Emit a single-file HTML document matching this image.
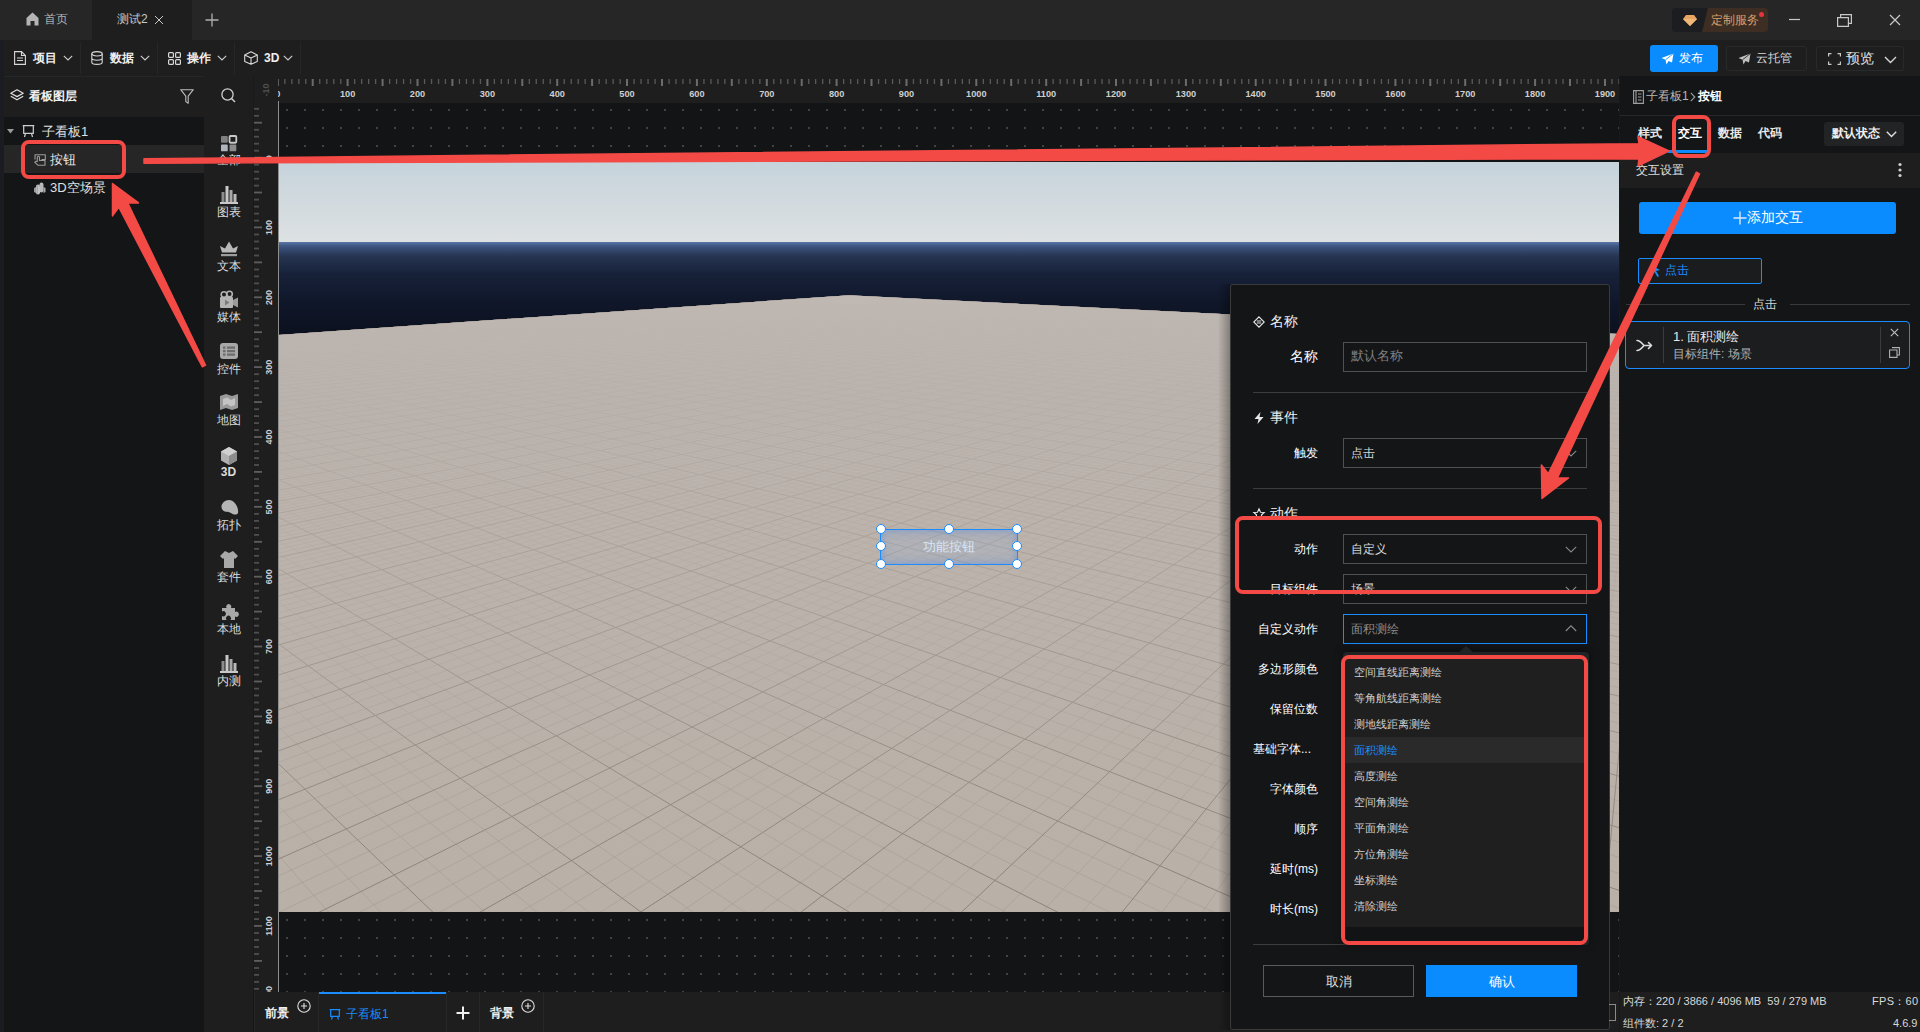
<!DOCTYPE html>
<html><head><meta charset="utf-8"><style>
html,body{margin:0;padding:0;width:1920px;height:1032px;overflow:hidden;background:#141517;font-family:"Liberation Sans", sans-serif;}
.r{position:absolute;}
.t{position:absolute;white-space:nowrap;}
svg.r{overflow:visible;}
</style></head><body>
<div class="r" style="left:0px;top:0px;width:1920px;height:40px;background:#262626;"></div>
<div class="r" style="left:92px;top:0px;width:100px;height:40px;background:#1e1e1e;"></div>
<svg class="r" style="left:26px;top:12px;" width="13" height="14" viewBox="0 0 13 14"><path d="M6.5 0.5 L12.5 6 L12.5 13.5 L8.5 13.5 L8.5 9 L4.5 9 L4.5 13.5 L0.5 13.5 L0.5 6 Z" fill="#b4b4b4"/></svg>
<div class="t" style="left:44px;top:12px;font-size:12px;line-height:14px;color:#b0b0b0;font-weight:normal;">首页</div>
<div class="t" style="left:117px;top:12px;font-size:12px;line-height:14px;color:#c8c8c8;font-weight:normal;">测试2</div>
<svg class="r" style="left:154px;top:15px;" width="10" height="10" viewBox="0 0 10 10"><path d="M1 1L9 9M9 1L1 9" stroke="#c8c8c8" stroke-width="1"/></svg>
<svg class="r" style="left:205px;top:13px;" width="14" height="14" viewBox="0 0 14 14"><path d="M7 0.5V13.5M0.5 7H13.5" stroke="#b0b0b0" stroke-width="1.3"/></svg>
<div class="r" style="left:1672px;top:8px;width:36px;height:24px;background:#1c1d21;border-radius:4px 0 0 4px"></div>
<svg class="r" style="left:1702px;top:8px;" width="66" height="24" viewBox="0 0 66 24"><path d="M6 0 H62 Q66 0 66 4 V20 Q66 24 62 24 H0 Z" fill="#3d2d22"/></svg>
<svg class="r" style="left:1683px;top:15px;" width="14" height="11" viewBox="0 0 14 11"><path d="M3 0 H11 L14 4 L7 11 L0 4 Z" fill="#e7a55f"/><path d="M0 4 H14 L7 11Z" fill="#f0b878"/></svg>
<div class="t" style="left:1711px;top:13px;font-size:12px;line-height:14px;color:#d8a070;font-weight:normal;">定制服务</div>
<div class="r" style="left:1759px;top:12px;width:5px;height:5px;background:#e8343c;border-radius:50%"></div>
<svg class="r" style="left:1789px;top:18px;" width="12" height="3" viewBox="0 0 12 3"><path d="M0 1.5H11" stroke="#c8c8c8" stroke-width="1.2"/></svg>
<svg class="r" style="left:1837px;top:13px;" width="16" height="14" viewBox="0 0 16 14"><path d="M0.6 4.6H11.4V13.4H0.6Z M3.6 4.6V1.6H14.4V10.4H11.4" fill="none" stroke="#c8c8c8" stroke-width="1.2"/></svg>
<svg class="r" style="left:1889px;top:14px;" width="12" height="12" viewBox="0 0 12 12"><path d="M1 1L11 11M11 1L1 11" stroke="#c8c8c8" stroke-width="1.2"/></svg>
<div class="r" style="left:0px;top:40px;width:1920px;height:36px;background:#1e1e1e;"></div>
<div class="r" style="left:0px;top:40px;width:4px;height:992px;background:#1a1c21;"></div>
<div class="r" style="left:80px;top:42px;width:1px;height:32px;background:#252628;"></div>
<div class="r" style="left:157px;top:42px;width:1px;height:32px;background:#252628;"></div>
<div class="r" style="left:234px;top:42px;width:1px;height:32px;background:#252628;"></div>
<div class="r" style="left:300px;top:42px;width:1px;height:32px;background:#252628;"></div>
<svg class="r" style="left:14px;top:51px;" width="12" height="14" viewBox="0 0 12 14"><path d="M0.6 0.6H7.5L11.4 4.5V13.4H0.6Z M7.5 0.6V4.5H11.4 M3 7H9 M3 9.5H9" fill="none" stroke="#d8d8d8" stroke-width="1.1"/></svg>
<div class="t" style="left:33px;top:51px;font-size:12px;line-height:14px;color:#f0f0f0;font-weight:bold;">项目</div>
<svg class="r" style="left:63px;top:55px;" width="10" height="6" viewBox="0 0 10 6"><path d="M0.8 0.8L5 5L9.2 0.8" fill="none" stroke="#cfcfcf" stroke-width="1.1"/></svg>
<svg class="r" style="left:91px;top:51px;" width="12" height="14" viewBox="0 0 12 14"><ellipse cx="6" cy="2.8" rx="5.2" ry="2.2" fill="none" stroke="#d8d8d8" stroke-width="1.1"/><path d="M0.8 2.8V11.2C0.8 12.4 3 13.4 6 13.4C9 13.4 11.2 12.4 11.2 11.2V2.8M0.8 7C0.8 8.2 3 9.2 6 9.2C9 9.2 11.2 8.2 11.2 7" fill="none" stroke="#d8d8d8" stroke-width="1.1"/></svg>
<div class="t" style="left:110px;top:51px;font-size:12px;line-height:14px;color:#f0f0f0;font-weight:bold;">数据</div>
<svg class="r" style="left:140px;top:55px;" width="10" height="6" viewBox="0 0 10 6"><path d="M0.8 0.8L5 5L9.2 0.8" fill="none" stroke="#cfcfcf" stroke-width="1.1"/></svg>
<svg class="r" style="left:168px;top:52px;" width="13" height="13" viewBox="0 0 13 13"><rect x="0.6" y="0.6" width="4.8" height="4.8" rx="1" fill="none" stroke="#d8d8d8" stroke-width="1.2"/><rect x="7.6" y="0.6" width="4.8" height="4.8" rx="1" fill="none" stroke="#d8d8d8" stroke-width="1.2"/><rect x="0.6" y="7.6" width="4.8" height="4.8" rx="1" fill="none" stroke="#d8d8d8" stroke-width="1.2"/><rect x="7.6" y="7.6" width="4.8" height="4.8" rx="1" fill="none" stroke="#d8d8d8" stroke-width="1.2"/></svg>
<div class="t" style="left:187px;top:51px;font-size:12px;line-height:14px;color:#f0f0f0;font-weight:bold;">操作</div>
<svg class="r" style="left:217px;top:55px;" width="10" height="6" viewBox="0 0 10 6"><path d="M0.8 0.8L5 5L9.2 0.8" fill="none" stroke="#cfcfcf" stroke-width="1.1"/></svg>
<svg class="r" style="left:244px;top:51px;" width="14" height="14" viewBox="0 0 14 14"><path d="M7 0.7L13.3 4V10.5L7 13.3L0.7 10.5V4Z M0.7 4L7 7L13.3 4 M7 7V13.3" fill="none" stroke="#d8d8d8" stroke-width="1.1" stroke-linejoin="round"/></svg>
<div class="t" style="left:264px;top:51px;font-size:12px;line-height:14px;color:#f0f0f0;font-weight:bold;">3D</div>
<svg class="r" style="left:283px;top:55px;" width="10" height="6" viewBox="0 0 10 6"><path d="M0.8 0.8L5 5L9.2 0.8" fill="none" stroke="#cfcfcf" stroke-width="1.1"/></svg>
<div class="r" style="left:1650px;top:45px;width:68px;height:27px;background:#0a8cff;border-radius:3px"></div>
<svg class="r" style="left:1661px;top:53px;" width="13" height="12" viewBox="0 0 13 12"><path d="M12.5 0.5L0.5 5L4.5 6.8L5.5 11.5L7.5 8L11 9.5Z" fill="#ffffff"/><path d="M12.5 0.5L4.5 6.8" stroke="#0a8cff" stroke-width="0.8"/></svg>
<div class="t" style="left:1679px;top:51px;font-size:12px;line-height:14px;color:#ffffff;font-weight:normal;">发布</div>
<div class="r" style="left:1726px;top:46px;width:81px;height:25px;background:transparent;border:1px solid #28292b;border-radius:3px;box-sizing:border-box"></div>
<svg class="r" style="left:1738px;top:53px;" width="13" height="12" viewBox="0 0 13 12"><path d="M12.5 0.5L0.5 5L4.5 6.8L5.5 11.5L7.5 8L11 9.5Z" fill="#c0c0c0"/><path d="M12.5 0.5L4.5 6.8" stroke="#1e1e1e" stroke-width="0.8"/></svg>
<div class="t" style="left:1756px;top:51px;font-size:12px;line-height:14px;color:#d8d8d8;font-weight:normal;">云托管</div>
<div class="r" style="left:1816px;top:46px;width:88px;height:25px;background:transparent;border:1px solid #28292b;border-radius:3px;box-sizing:border-box"></div>
<svg class="r" style="left:1828px;top:53px;" width="13" height="12" viewBox="0 0 13 12"><path d="M0.6 3.5V0.6H3.5 M9.5 0.6H12.4V3.5 M12.4 8.5V11.4H9.5 M3.5 11.4H0.6V8.5" fill="none" stroke="#c8c8c8" stroke-width="1.2"/></svg>
<div class="t" style="left:1846px;top:50px;font-size:14px;line-height:16px;color:#e0e0e0;font-weight:normal;">预览</div>
<svg class="r" style="left:1884px;top:56px;" width="13" height="8" viewBox="0 0 13 8"><path d="M1 1L6.5 6.5L12 1" fill="none" stroke="#d8d8d8" stroke-width="1.4"/></svg>
<div class="r" style="left:4px;top:76px;width:200px;height:41px;background:#1e1e1e;"></div>
<div class="r" style="left:4px;top:76px;width:200px;height:1px;background:#25262a;"></div>
<div class="r" style="left:4px;top:117px;width:200px;height:915px;background:#141517;"></div>
<svg class="r" style="left:10px;top:89px;" width="14" height="13" viewBox="0 0 14 13"><path d="M7 0.8L13.2 4.2L7 7.6L0.8 4.2Z" fill="none" stroke="#e0e0e0" stroke-width="1.2" stroke-linejoin="round"/><path d="M0.8 7.2L7 10.8L13.2 7.2" fill="none" stroke="#e0e0e0" stroke-width="1.2" stroke-linejoin="round"/></svg>
<div class="t" style="left:29px;top:89px;font-size:12px;line-height:14px;color:#f2f2f2;font-weight:bold;">看板图层</div>
<svg class="r" style="left:180px;top:89px;" width="14" height="15" viewBox="0 0 14 15"><path d="M0.7 0.7H13.3L8.2 7.2V14.2L5.8 12.6V7.2Z" fill="none" stroke="#bdbdbd" stroke-width="1.1" stroke-linejoin="round"/></svg>
<div class="r" style="left:4px;top:145px;width:200px;height:28px;background:#262626;"></div>
<svg class="r" style="left:7px;top:129px;" width="8" height="5" viewBox="0 0 8 5"><path d="M0 0H7L3.5 4.5Z" fill="#9a9a9a"/></svg>
<svg class="r" style="left:22px;top:125px;" width="13" height="13" viewBox="0 0 13 13"><path d="M0.7 0.7H12.3 M1.7 0.7V8.3H11.3V0.7 M3.5 8.3L2.5 12 M9.5 8.3L10.5 12" fill="none" stroke="#cfcfcf" stroke-width="1.2"/></svg>
<div class="t" style="left:42px;top:124px;font-size:13px;line-height:15px;color:#e0e0e0;font-weight:normal;">子看板1</div>
<svg class="r" style="left:34px;top:154px;" width="12" height="12" viewBox="0 0 12 12"><path d="M1 5.5V0.7H11.3V5.5H7.5M3.3 7.8V3.3Q3.3 2.2 4.4 2.2Q5.5 2.2 5.5 3.3V6.5H11V11.3H4.2L0.8 8.3L2.2 7.3L3.3 7.8" fill="none" stroke="#9c9c9c" stroke-width="1.1" stroke-linejoin="round"/></svg>
<div class="t" style="left:50px;top:152px;font-size:13px;line-height:15px;color:#e8e8e8;font-weight:normal;">按钮</div>
<svg class="r" style="left:34px;top:182px;" width="12" height="12" viewBox="0 0 12 12"><path d="M0 6L2 5V11L0 10Z" fill="#9a9a9a"/><path d="M9.5 5L11.5 6V10L9.5 11Z" fill="#a8a8a8"/><rect x="5.5" y="0.5" width="4" height="10" rx="2" fill="#b8b8b8"/><rect x="2" y="2.5" width="4" height="10" rx="2" fill="#c4c4c4"/><rect x="2.6" y="3.5" width="1.2" height="8" fill="#a0a0a0"/></svg>
<div class="t" style="left:50px;top:180px;font-size:13px;line-height:15px;color:#e0e0e0;font-weight:normal;">3D空场景</div>
<div class="r" style="left:204px;top:76px;width:49px;height:956px;background:#1e1e1e;"></div>
<svg class="r" style="left:221px;top:88px;" width="15" height="15" viewBox="0 0 15 15"><circle cx="6.5" cy="6.5" r="5.6" fill="none" stroke="#d0d0d0" stroke-width="1.3"/><path d="M10.5 10.5L14 14" stroke="#d0d0d0" stroke-width="1.4"/></svg>
<svg class="r" style="left:220px;top:135px;" width="18" height="18" viewBox="0 0 18 18"><g transform="translate(1 1) scale(0.9)"><rect x="0" y="0" width="7.5" height="7.5" rx="1" fill="#808080"/><rect x="9.5" y="0" width="7.5" height="7.5" rx="1" fill="none" stroke="#c8c8c8" stroke-width="2"/><rect x="0" y="9.5" width="7.5" height="7.5" rx="1" fill="#b0b4bc"/><rect x="9.5" y="9.5" width="7.5" height="7.5" rx="1" fill="#8c8c8c"/></g></svg>
<div class="t" style="left:204px;top:153px;font-size:12px;line-height:14px;color:#dcdcdc;font-weight:normal;width:49px;text-align:center">全部</div>
<svg class="r" style="left:220px;top:186px;" width="18" height="18" viewBox="0 0 18 18"><rect x="1.5" y="6" width="3" height="10" fill="#8c8c8c"/><rect x="5.5" y="0" width="3" height="16" fill="#c8c8c8"/><rect x="9.5" y="4" width="3" height="12" fill="#a8a8a8"/><rect x="13.5" y="8" width="3" height="8" fill="#b8b8b8"/><rect x="0" y="16" width="18" height="2" fill="#c8c8c8"/></svg>
<div class="t" style="left:204px;top:205px;font-size:12px;line-height:14px;color:#dcdcdc;font-weight:normal;width:49px;text-align:center">图表</div>
<svg class="r" style="left:220px;top:240px;" width="18" height="18" viewBox="0 0 18 18"><path d="M0 6L5 8.5L9 1.5L13 8.5L18 6L16 12.5H2Z" fill="#b8b8b8"/><rect x="1" y="14" width="16" height="2.2" fill="#9c9c9c"/></svg>
<div class="t" style="left:204px;top:259px;font-size:12px;line-height:14px;color:#dcdcdc;font-weight:normal;width:49px;text-align:center">文本</div>
<svg class="r" style="left:220px;top:291px;" width="18" height="18" viewBox="0 0 18 18"><rect x="0" y="6" width="13" height="11" rx="1" fill="#b4b4b4"/><path d="M13 9L18 6.5V16.5L13 14Z" fill="#9a9a9a"/><circle cx="4" cy="3.5" r="2.8" fill="none" stroke="#b4b4b4" stroke-width="1.6"/><circle cx="9.5" cy="3" r="2.8" fill="none" stroke="#b4b4b4" stroke-width="1.6"/><path d="M5 8.5L9.5 11.5L5 14.5Z" fill="#7c7c7c"/></svg>
<div class="t" style="left:204px;top:310px;font-size:12px;line-height:14px;color:#dcdcdc;font-weight:normal;width:49px;text-align:center">媒体</div>
<svg class="r" style="left:220px;top:343px;" width="18" height="18" viewBox="0 0 18 18"><rect x="0" y="0" width="18" height="16" rx="3" fill="#a8a8a8"/><rect x="3" y="3.5" width="2.5" height="2.2" fill="#6c6c6c"/><rect x="7" y="3.5" width="8" height="2.2" fill="#6c6c6c"/><rect x="3" y="7" width="2.5" height="2.2" fill="#6c6c6c"/><rect x="7" y="7" width="8" height="2.2" fill="#6c6c6c"/><rect x="3" y="10.5" width="2.5" height="2.2" fill="#6c6c6c"/><rect x="7" y="10.5" width="8" height="2.2" fill="#6c6c6c"/></svg>
<div class="t" style="left:204px;top:362px;font-size:12px;line-height:14px;color:#dcdcdc;font-weight:normal;width:49px;text-align:center">控件</div>
<svg class="r" style="left:220px;top:394px;" width="18" height="18" viewBox="0 0 18 18"><path d="M0 2L6 0L12 2L18 0V14L12 16L6 14L0 16Z" fill="#9a9a9a"/><path d="M3 5L7 3.5L11 6L15 4V11L11 12.5L7 10L3 12Z" fill="#c4c4c4"/></svg>
<div class="t" style="left:204px;top:413px;font-size:12px;line-height:14px;color:#dcdcdc;font-weight:normal;width:49px;text-align:center">地图</div>
<svg class="r" style="left:220px;top:447px;" width="18" height="18" viewBox="0 0 18 18"><path d="M9 0L17 4.5V13.5L9 18L1 13.5V4.5Z" fill="#b0b0b0"/><path d="M1 4.5L9 9L17 4.5L9 0Z" fill="#d0d0d0"/><path d="M9 9V18L17 13.5V4.5Z" fill="#8c8c8c"/></svg>
<div class="t" style="left:204px;top:465px;font-size:12px;line-height:14px;color:#dcdcdc;font-weight:bold;width:49px;text-align:center">3D</div>
<svg class="r" style="left:220px;top:499px;" width="18" height="18" viewBox="0 0 18 18"><path d="M2 10C0 6 4 1 9 1C14 1 19 8 18 14C17 16 14 16 11 14C8 12 4 14 2 10Z" fill="#b4b4b4"/></svg>
<div class="t" style="left:204px;top:518px;font-size:12px;line-height:14px;color:#dcdcdc;font-weight:normal;width:49px;text-align:center">拓扑</div>
<svg class="r" style="left:220px;top:551px;" width="18" height="18" viewBox="0 0 18 18"><path d="M5 0L9 2L13 0L18 5L15 8L14 7V17H4V7L3 8L0 5Z" fill="#a8a8a8"/></svg>
<div class="t" style="left:204px;top:570px;font-size:12px;line-height:14px;color:#dcdcdc;font-weight:normal;width:49px;text-align:center">套件</div>
<svg class="r" style="left:220px;top:603px;" width="18" height="18" viewBox="0 0 18 18"><path d="M2 5H6.5A2.6 2.6 0 1 1 11 5H15V9A2.6 2.6 0 1 1 15 13.5V17H10.5A2.6 2.6 0 1 0 6.5 17H2V13A2.6 2.6 0 1 0 2 8.5Z" fill="#a8a8a8"/></svg>
<div class="t" style="left:204px;top:622px;font-size:12px;line-height:14px;color:#dcdcdc;font-weight:normal;width:49px;text-align:center">本地</div>
<svg class="r" style="left:220px;top:655px;" width="18" height="18" viewBox="0 0 18 18"><rect x="1.5" y="6" width="3" height="10" fill="#8c8c8c"/><rect x="5.5" y="0" width="3" height="16" fill="#c8c8c8"/><rect x="9.5" y="4" width="3" height="12" fill="#a8a8a8"/><rect x="13.5" y="8" width="3" height="8" fill="#b8b8b8"/><rect x="0" y="16" width="18" height="2" fill="#c8c8c8"/></svg>
<div class="t" style="left:204px;top:674px;font-size:12px;line-height:14px;color:#dcdcdc;font-weight:normal;width:49px;text-align:center">内测</div>
<div class="r" style="left:253px;top:76px;width:1367px;height:27px;background:#1e1e1e;"></div>
<div class="r" style="left:253px;top:103px;width:25px;height:889px;background:#1e1e1e;"></div>
<svg class="r" style="left:253px;top:76px;" width="1367" height="27" viewBox="0 0 1367 27"><rect x="23.8" y="3" width="2" height="7" fill="#6c6c6c"/><rect x="31.2" y="3" width="1.3" height="5" fill="#5a5a5a"/><rect x="38.2" y="3" width="1.3" height="5" fill="#5a5a5a"/><rect x="45.2" y="3" width="1.3" height="5" fill="#5a5a5a"/><rect x="52.1" y="3" width="1.3" height="5" fill="#5a5a5a"/><rect x="58.7" y="3" width="2" height="7" fill="#6c6c6c"/><rect x="66.1" y="3" width="1.3" height="5" fill="#5a5a5a"/><rect x="73.1" y="3" width="1.3" height="5" fill="#5a5a5a"/><rect x="80.1" y="3" width="1.3" height="5" fill="#5a5a5a"/><rect x="87.1" y="3" width="1.3" height="5" fill="#5a5a5a"/><rect x="93.6" y="3" width="2" height="7" fill="#6c6c6c"/><rect x="101.0" y="3" width="1.3" height="5" fill="#5a5a5a"/><rect x="108.0" y="3" width="1.3" height="5" fill="#5a5a5a"/><rect x="115.0" y="3" width="1.3" height="5" fill="#5a5a5a"/><rect x="122.0" y="3" width="1.3" height="5" fill="#5a5a5a"/><rect x="128.6" y="3" width="2" height="7" fill="#6c6c6c"/><rect x="136.0" y="3" width="1.3" height="5" fill="#5a5a5a"/><rect x="142.9" y="3" width="1.3" height="5" fill="#5a5a5a"/><rect x="149.9" y="3" width="1.3" height="5" fill="#5a5a5a"/><rect x="156.9" y="3" width="1.3" height="5" fill="#5a5a5a"/><rect x="163.5" y="3" width="2" height="7" fill="#6c6c6c"/><rect x="170.9" y="3" width="1.3" height="5" fill="#5a5a5a"/><rect x="177.9" y="3" width="1.3" height="5" fill="#5a5a5a"/><rect x="184.9" y="3" width="1.3" height="5" fill="#5a5a5a"/><rect x="191.8" y="3" width="1.3" height="5" fill="#5a5a5a"/><rect x="198.4" y="3" width="2" height="7" fill="#6c6c6c"/><rect x="205.8" y="3" width="1.3" height="5" fill="#5a5a5a"/><rect x="212.8" y="3" width="1.3" height="5" fill="#5a5a5a"/><rect x="219.8" y="3" width="1.3" height="5" fill="#5a5a5a"/><rect x="226.8" y="3" width="1.3" height="5" fill="#5a5a5a"/><rect x="233.4" y="3" width="2" height="7" fill="#6c6c6c"/><rect x="240.7" y="3" width="1.3" height="5" fill="#5a5a5a"/><rect x="247.7" y="3" width="1.3" height="5" fill="#5a5a5a"/><rect x="254.7" y="3" width="1.3" height="5" fill="#5a5a5a"/><rect x="261.7" y="3" width="1.3" height="5" fill="#5a5a5a"/><rect x="268.3" y="3" width="2" height="7" fill="#6c6c6c"/><rect x="275.7" y="3" width="1.3" height="5" fill="#5a5a5a"/><rect x="282.6" y="3" width="1.3" height="5" fill="#5a5a5a"/><rect x="289.6" y="3" width="1.3" height="5" fill="#5a5a5a"/><rect x="296.6" y="3" width="1.3" height="5" fill="#5a5a5a"/><rect x="303.2" y="3" width="2" height="7" fill="#6c6c6c"/><rect x="310.6" y="3" width="1.3" height="5" fill="#5a5a5a"/><rect x="317.6" y="3" width="1.3" height="5" fill="#5a5a5a"/><rect x="324.6" y="3" width="1.3" height="5" fill="#5a5a5a"/><rect x="331.5" y="3" width="1.3" height="5" fill="#5a5a5a"/><rect x="338.1" y="3" width="2" height="7" fill="#6c6c6c"/><rect x="345.5" y="3" width="1.3" height="5" fill="#5a5a5a"/><rect x="352.5" y="3" width="1.3" height="5" fill="#5a5a5a"/><rect x="359.5" y="3" width="1.3" height="5" fill="#5a5a5a"/><rect x="366.5" y="3" width="1.3" height="5" fill="#5a5a5a"/><rect x="373.0" y="3" width="2" height="7" fill="#6c6c6c"/><rect x="380.4" y="3" width="1.3" height="5" fill="#5a5a5a"/><rect x="387.4" y="3" width="1.3" height="5" fill="#5a5a5a"/><rect x="394.4" y="3" width="1.3" height="5" fill="#5a5a5a"/><rect x="401.4" y="3" width="1.3" height="5" fill="#5a5a5a"/><rect x="408.0" y="3" width="2" height="7" fill="#6c6c6c"/><rect x="415.4" y="3" width="1.3" height="5" fill="#5a5a5a"/><rect x="422.3" y="3" width="1.3" height="5" fill="#5a5a5a"/><rect x="429.3" y="3" width="1.3" height="5" fill="#5a5a5a"/><rect x="436.3" y="3" width="1.3" height="5" fill="#5a5a5a"/><rect x="442.9" y="3" width="2" height="7" fill="#6c6c6c"/><rect x="450.3" y="3" width="1.3" height="5" fill="#5a5a5a"/><rect x="457.3" y="3" width="1.3" height="5" fill="#5a5a5a"/><rect x="464.3" y="3" width="1.3" height="5" fill="#5a5a5a"/><rect x="471.2" y="3" width="1.3" height="5" fill="#5a5a5a"/><rect x="477.8" y="3" width="2" height="7" fill="#6c6c6c"/><rect x="485.2" y="3" width="1.3" height="5" fill="#5a5a5a"/><rect x="492.2" y="3" width="1.3" height="5" fill="#5a5a5a"/><rect x="499.2" y="3" width="1.3" height="5" fill="#5a5a5a"/><rect x="506.2" y="3" width="1.3" height="5" fill="#5a5a5a"/><rect x="512.8" y="3" width="2" height="7" fill="#6c6c6c"/><rect x="520.1" y="3" width="1.3" height="5" fill="#5a5a5a"/><rect x="527.1" y="3" width="1.3" height="5" fill="#5a5a5a"/><rect x="534.1" y="3" width="1.3" height="5" fill="#5a5a5a"/><rect x="541.1" y="3" width="1.3" height="5" fill="#5a5a5a"/><rect x="547.7" y="3" width="2" height="7" fill="#6c6c6c"/><rect x="555.1" y="3" width="1.3" height="5" fill="#5a5a5a"/><rect x="562.0" y="3" width="1.3" height="5" fill="#5a5a5a"/><rect x="569.0" y="3" width="1.3" height="5" fill="#5a5a5a"/><rect x="576.0" y="3" width="1.3" height="5" fill="#5a5a5a"/><rect x="582.6" y="3" width="2" height="7" fill="#6c6c6c"/><rect x="590.0" y="3" width="1.3" height="5" fill="#5a5a5a"/><rect x="597.0" y="3" width="1.3" height="5" fill="#5a5a5a"/><rect x="604.0" y="3" width="1.3" height="5" fill="#5a5a5a"/><rect x="610.9" y="3" width="1.3" height="5" fill="#5a5a5a"/><rect x="617.5" y="3" width="2" height="7" fill="#6c6c6c"/><rect x="624.9" y="3" width="1.3" height="5" fill="#5a5a5a"/><rect x="631.9" y="3" width="1.3" height="5" fill="#5a5a5a"/><rect x="638.9" y="3" width="1.3" height="5" fill="#5a5a5a"/><rect x="645.9" y="3" width="1.3" height="5" fill="#5a5a5a"/><rect x="652.5" y="3" width="2" height="7" fill="#6c6c6c"/><rect x="659.8" y="3" width="1.3" height="5" fill="#5a5a5a"/><rect x="666.8" y="3" width="1.3" height="5" fill="#5a5a5a"/><rect x="673.8" y="3" width="1.3" height="5" fill="#5a5a5a"/><rect x="680.8" y="3" width="1.3" height="5" fill="#5a5a5a"/><rect x="687.4" y="3" width="2" height="7" fill="#6c6c6c"/><rect x="694.8" y="3" width="1.3" height="5" fill="#5a5a5a"/><rect x="701.7" y="3" width="1.3" height="5" fill="#5a5a5a"/><rect x="708.7" y="3" width="1.3" height="5" fill="#5a5a5a"/><rect x="715.7" y="3" width="1.3" height="5" fill="#5a5a5a"/><rect x="722.3" y="3" width="2" height="7" fill="#6c6c6c"/><rect x="729.7" y="3" width="1.3" height="5" fill="#5a5a5a"/><rect x="736.7" y="3" width="1.3" height="5" fill="#5a5a5a"/><rect x="743.7" y="3" width="1.3" height="5" fill="#5a5a5a"/><rect x="750.6" y="3" width="1.3" height="5" fill="#5a5a5a"/><rect x="757.2" y="3" width="2" height="7" fill="#6c6c6c"/><rect x="764.6" y="3" width="1.3" height="5" fill="#5a5a5a"/><rect x="771.6" y="3" width="1.3" height="5" fill="#5a5a5a"/><rect x="778.6" y="3" width="1.3" height="5" fill="#5a5a5a"/><rect x="785.6" y="3" width="1.3" height="5" fill="#5a5a5a"/><rect x="792.2" y="3" width="2" height="7" fill="#6c6c6c"/><rect x="799.5" y="3" width="1.3" height="5" fill="#5a5a5a"/><rect x="806.5" y="3" width="1.3" height="5" fill="#5a5a5a"/><rect x="813.5" y="3" width="1.3" height="5" fill="#5a5a5a"/><rect x="820.5" y="3" width="1.3" height="5" fill="#5a5a5a"/><rect x="827.1" y="3" width="2" height="7" fill="#6c6c6c"/><rect x="834.5" y="3" width="1.3" height="5" fill="#5a5a5a"/><rect x="841.4" y="3" width="1.3" height="5" fill="#5a5a5a"/><rect x="848.4" y="3" width="1.3" height="5" fill="#5a5a5a"/><rect x="855.4" y="3" width="1.3" height="5" fill="#5a5a5a"/><rect x="862.0" y="3" width="2" height="7" fill="#6c6c6c"/><rect x="869.4" y="3" width="1.3" height="5" fill="#5a5a5a"/><rect x="876.4" y="3" width="1.3" height="5" fill="#5a5a5a"/><rect x="883.4" y="3" width="1.3" height="5" fill="#5a5a5a"/><rect x="890.3" y="3" width="1.3" height="5" fill="#5a5a5a"/><rect x="896.9" y="3" width="2" height="7" fill="#6c6c6c"/><rect x="904.3" y="3" width="1.3" height="5" fill="#5a5a5a"/><rect x="911.3" y="3" width="1.3" height="5" fill="#5a5a5a"/><rect x="918.3" y="3" width="1.3" height="5" fill="#5a5a5a"/><rect x="925.3" y="3" width="1.3" height="5" fill="#5a5a5a"/><rect x="931.9" y="3" width="2" height="7" fill="#6c6c6c"/><rect x="939.2" y="3" width="1.3" height="5" fill="#5a5a5a"/><rect x="946.2" y="3" width="1.3" height="5" fill="#5a5a5a"/><rect x="953.2" y="3" width="1.3" height="5" fill="#5a5a5a"/><rect x="960.2" y="3" width="1.3" height="5" fill="#5a5a5a"/><rect x="966.8" y="3" width="2" height="7" fill="#6c6c6c"/><rect x="974.2" y="3" width="1.3" height="5" fill="#5a5a5a"/><rect x="981.1" y="3" width="1.3" height="5" fill="#5a5a5a"/><rect x="988.1" y="3" width="1.3" height="5" fill="#5a5a5a"/><rect x="995.1" y="3" width="1.3" height="5" fill="#5a5a5a"/><rect x="1001.7" y="3" width="2" height="7" fill="#6c6c6c"/><rect x="1009.1" y="3" width="1.3" height="5" fill="#5a5a5a"/><rect x="1016.1" y="3" width="1.3" height="5" fill="#5a5a5a"/><rect x="1023.1" y="3" width="1.3" height="5" fill="#5a5a5a"/><rect x="1030.0" y="3" width="1.3" height="5" fill="#5a5a5a"/><rect x="1036.6" y="3" width="2" height="7" fill="#6c6c6c"/><rect x="1044.0" y="3" width="1.3" height="5" fill="#5a5a5a"/><rect x="1051.0" y="3" width="1.3" height="5" fill="#5a5a5a"/><rect x="1058.0" y="3" width="1.3" height="5" fill="#5a5a5a"/><rect x="1065.0" y="3" width="1.3" height="5" fill="#5a5a5a"/><rect x="1071.5" y="3" width="2" height="7" fill="#6c6c6c"/><rect x="1078.9" y="3" width="1.3" height="5" fill="#5a5a5a"/><rect x="1085.9" y="3" width="1.3" height="5" fill="#5a5a5a"/><rect x="1092.9" y="3" width="1.3" height="5" fill="#5a5a5a"/><rect x="1099.9" y="3" width="1.3" height="5" fill="#5a5a5a"/><rect x="1106.5" y="3" width="2" height="7" fill="#6c6c6c"/><rect x="1113.9" y="3" width="1.3" height="5" fill="#5a5a5a"/><rect x="1120.8" y="3" width="1.3" height="5" fill="#5a5a5a"/><rect x="1127.8" y="3" width="1.3" height="5" fill="#5a5a5a"/><rect x="1134.8" y="3" width="1.3" height="5" fill="#5a5a5a"/><rect x="1141.4" y="3" width="2" height="7" fill="#6c6c6c"/><rect x="1148.8" y="3" width="1.3" height="5" fill="#5a5a5a"/><rect x="1155.8" y="3" width="1.3" height="5" fill="#5a5a5a"/><rect x="1162.8" y="3" width="1.3" height="5" fill="#5a5a5a"/><rect x="1169.7" y="3" width="1.3" height="5" fill="#5a5a5a"/><rect x="1176.3" y="3" width="2" height="7" fill="#6c6c6c"/><rect x="1183.7" y="3" width="1.3" height="5" fill="#5a5a5a"/><rect x="1190.7" y="3" width="1.3" height="5" fill="#5a5a5a"/><rect x="1197.7" y="3" width="1.3" height="5" fill="#5a5a5a"/><rect x="1204.7" y="3" width="1.3" height="5" fill="#5a5a5a"/><rect x="1211.2" y="3" width="2" height="7" fill="#6c6c6c"/><rect x="1218.6" y="3" width="1.3" height="5" fill="#5a5a5a"/><rect x="1225.6" y="3" width="1.3" height="5" fill="#5a5a5a"/><rect x="1232.6" y="3" width="1.3" height="5" fill="#5a5a5a"/><rect x="1239.6" y="3" width="1.3" height="5" fill="#5a5a5a"/><rect x="1246.2" y="3" width="2" height="7" fill="#6c6c6c"/><rect x="1253.6" y="3" width="1.3" height="5" fill="#5a5a5a"/><rect x="1260.5" y="3" width="1.3" height="5" fill="#5a5a5a"/><rect x="1267.5" y="3" width="1.3" height="5" fill="#5a5a5a"/><rect x="1274.5" y="3" width="1.3" height="5" fill="#5a5a5a"/><rect x="1281.1" y="3" width="2" height="7" fill="#6c6c6c"/><rect x="1288.5" y="3" width="1.3" height="5" fill="#5a5a5a"/><rect x="1295.5" y="3" width="1.3" height="5" fill="#5a5a5a"/><rect x="1302.5" y="3" width="1.3" height="5" fill="#5a5a5a"/><rect x="1309.4" y="3" width="1.3" height="5" fill="#5a5a5a"/><rect x="1316.0" y="3" width="2" height="7" fill="#6c6c6c"/><rect x="1323.4" y="3" width="1.3" height="5" fill="#5a5a5a"/><rect x="1330.4" y="3" width="1.3" height="5" fill="#5a5a5a"/><rect x="1337.4" y="3" width="1.3" height="5" fill="#5a5a5a"/><rect x="1344.4" y="3" width="1.3" height="5" fill="#5a5a5a"/><rect x="1351.0" y="3" width="2" height="7" fill="#6c6c6c"/><rect x="1358.3" y="3" width="1.3" height="5" fill="#5a5a5a"/><rect x="1365.3" y="3" width="1.3" height="5" fill="#5a5a5a"/><g font-family="Liberation Sans, sans-serif" font-size="9.2" font-weight="bold" fill="#cfcfcf"><text x="24.8" y="21" text-anchor="middle">0</text><text x="94.6" y="21" text-anchor="middle">100</text><text x="164.5" y="21" text-anchor="middle">200</text><text x="234.4" y="21" text-anchor="middle">300</text><text x="304.2" y="21" text-anchor="middle">400</text><text x="374.0" y="21" text-anchor="middle">500</text><text x="443.9" y="21" text-anchor="middle">600</text><text x="513.8" y="21" text-anchor="middle">700</text><text x="583.6" y="21" text-anchor="middle">800</text><text x="653.5" y="21" text-anchor="middle">900</text><text x="723.3" y="21" text-anchor="middle">1000</text><text x="793.2" y="21" text-anchor="middle">1100</text><text x="863.0" y="21" text-anchor="middle">1200</text><text x="932.9" y="21" text-anchor="middle">1300</text><text x="1002.7" y="21" text-anchor="middle">1400</text><text x="1072.5" y="21" text-anchor="middle">1500</text><text x="1142.4" y="21" text-anchor="middle">1600</text><text x="1212.2" y="21" text-anchor="middle">1700</text><text x="1282.1" y="21" text-anchor="middle">1800</text><text x="1352.0" y="21" text-anchor="middle">1900</text></g></svg>
<svg class="r" style="left:253px;top:103px;overflow:hidden" width="25" height="889" viewBox="0 0 25 889"><rect x="1" y="-2.1" width="5" height="1.8" fill="#4e4e4e"/><rect x="1" y="4.9" width="5" height="1.8" fill="#4e4e4e"/><rect x="1" y="11.9" width="5" height="1.8" fill="#4e4e4e"/><rect x="1" y="18.8" width="8" height="1.8" fill="#5e5e5e"/><rect x="1" y="25.9" width="5" height="1.8" fill="#4e4e4e"/><rect x="1" y="32.8" width="5" height="1.8" fill="#4e4e4e"/><rect x="1" y="39.8" width="5" height="1.8" fill="#4e4e4e"/><rect x="1" y="46.8" width="5" height="1.8" fill="#4e4e4e"/><rect x="1" y="53.7" width="8" height="1.8" fill="#5e5e5e"/><rect x="1" y="60.8" width="5" height="1.8" fill="#4e4e4e"/><rect x="1" y="67.8" width="5" height="1.8" fill="#4e4e4e"/><rect x="1" y="74.8" width="5" height="1.8" fill="#4e4e4e"/><rect x="1" y="81.7" width="5" height="1.8" fill="#4e4e4e"/><rect x="1" y="88.6" width="8" height="1.8" fill="#5e5e5e"/><rect x="1" y="95.7" width="5" height="1.8" fill="#4e4e4e"/><rect x="1" y="102.7" width="5" height="1.8" fill="#4e4e4e"/><rect x="1" y="109.7" width="5" height="1.8" fill="#4e4e4e"/><rect x="1" y="116.7" width="5" height="1.8" fill="#4e4e4e"/><rect x="1" y="123.5" width="8" height="1.8" fill="#5e5e5e"/><rect x="1" y="130.6" width="5" height="1.8" fill="#4e4e4e"/><rect x="1" y="137.6" width="5" height="1.8" fill="#4e4e4e"/><rect x="1" y="144.6" width="5" height="1.8" fill="#4e4e4e"/><rect x="1" y="151.6" width="5" height="1.8" fill="#4e4e4e"/><rect x="1" y="158.5" width="8" height="1.8" fill="#5e5e5e"/><rect x="1" y="165.6" width="5" height="1.8" fill="#4e4e4e"/><rect x="1" y="172.5" width="5" height="1.8" fill="#4e4e4e"/><rect x="1" y="179.5" width="5" height="1.8" fill="#4e4e4e"/><rect x="1" y="186.5" width="5" height="1.8" fill="#4e4e4e"/><rect x="1" y="193.4" width="8" height="1.8" fill="#5e5e5e"/><rect x="1" y="200.5" width="5" height="1.8" fill="#4e4e4e"/><rect x="1" y="207.5" width="5" height="1.8" fill="#4e4e4e"/><rect x="1" y="214.5" width="5" height="1.8" fill="#4e4e4e"/><rect x="1" y="221.4" width="5" height="1.8" fill="#4e4e4e"/><rect x="1" y="228.3" width="8" height="1.8" fill="#5e5e5e"/><rect x="1" y="235.4" width="5" height="1.8" fill="#4e4e4e"/><rect x="1" y="242.4" width="5" height="1.8" fill="#4e4e4e"/><rect x="1" y="249.4" width="5" height="1.8" fill="#4e4e4e"/><rect x="1" y="256.4" width="5" height="1.8" fill="#4e4e4e"/><rect x="1" y="263.2" width="8" height="1.8" fill="#5e5e5e"/><rect x="1" y="270.3" width="5" height="1.8" fill="#4e4e4e"/><rect x="1" y="277.3" width="5" height="1.8" fill="#4e4e4e"/><rect x="1" y="284.3" width="5" height="1.8" fill="#4e4e4e"/><rect x="1" y="291.3" width="5" height="1.8" fill="#4e4e4e"/><rect x="1" y="298.2" width="8" height="1.8" fill="#5e5e5e"/><rect x="1" y="305.3" width="5" height="1.8" fill="#4e4e4e"/><rect x="1" y="312.2" width="5" height="1.8" fill="#4e4e4e"/><rect x="1" y="319.2" width="5" height="1.8" fill="#4e4e4e"/><rect x="1" y="326.2" width="5" height="1.8" fill="#4e4e4e"/><rect x="1" y="333.1" width="8" height="1.8" fill="#5e5e5e"/><rect x="1" y="340.2" width="5" height="1.8" fill="#4e4e4e"/><rect x="1" y="347.2" width="5" height="1.8" fill="#4e4e4e"/><rect x="1" y="354.2" width="5" height="1.8" fill="#4e4e4e"/><rect x="1" y="361.1" width="5" height="1.8" fill="#4e4e4e"/><rect x="1" y="368.0" width="8" height="1.8" fill="#5e5e5e"/><rect x="1" y="375.1" width="5" height="1.8" fill="#4e4e4e"/><rect x="1" y="382.1" width="5" height="1.8" fill="#4e4e4e"/><rect x="1" y="389.1" width="5" height="1.8" fill="#4e4e4e"/><rect x="1" y="396.1" width="5" height="1.8" fill="#4e4e4e"/><rect x="1" y="402.9" width="8" height="1.8" fill="#5e5e5e"/><rect x="1" y="410.0" width="5" height="1.8" fill="#4e4e4e"/><rect x="1" y="417.0" width="5" height="1.8" fill="#4e4e4e"/><rect x="1" y="424.0" width="5" height="1.8" fill="#4e4e4e"/><rect x="1" y="431.0" width="5" height="1.8" fill="#4e4e4e"/><rect x="1" y="437.9" width="8" height="1.8" fill="#5e5e5e"/><rect x="1" y="445.0" width="5" height="1.8" fill="#4e4e4e"/><rect x="1" y="451.9" width="5" height="1.8" fill="#4e4e4e"/><rect x="1" y="458.9" width="5" height="1.8" fill="#4e4e4e"/><rect x="1" y="465.9" width="5" height="1.8" fill="#4e4e4e"/><rect x="1" y="472.8" width="8" height="1.8" fill="#5e5e5e"/><rect x="1" y="479.9" width="5" height="1.8" fill="#4e4e4e"/><rect x="1" y="486.9" width="5" height="1.8" fill="#4e4e4e"/><rect x="1" y="493.9" width="5" height="1.8" fill="#4e4e4e"/><rect x="1" y="500.8" width="5" height="1.8" fill="#4e4e4e"/><rect x="1" y="507.7" width="8" height="1.8" fill="#5e5e5e"/><rect x="1" y="514.8" width="5" height="1.8" fill="#4e4e4e"/><rect x="1" y="521.8" width="5" height="1.8" fill="#4e4e4e"/><rect x="1" y="528.8" width="5" height="1.8" fill="#4e4e4e"/><rect x="1" y="535.8" width="5" height="1.8" fill="#4e4e4e"/><rect x="1" y="542.6" width="8" height="1.8" fill="#5e5e5e"/><rect x="1" y="549.7" width="5" height="1.8" fill="#4e4e4e"/><rect x="1" y="556.7" width="5" height="1.8" fill="#4e4e4e"/><rect x="1" y="563.7" width="5" height="1.8" fill="#4e4e4e"/><rect x="1" y="570.7" width="5" height="1.8" fill="#4e4e4e"/><rect x="1" y="577.6" width="8" height="1.8" fill="#5e5e5e"/><rect x="1" y="584.7" width="5" height="1.8" fill="#4e4e4e"/><rect x="1" y="591.6" width="5" height="1.8" fill="#4e4e4e"/><rect x="1" y="598.6" width="5" height="1.8" fill="#4e4e4e"/><rect x="1" y="605.6" width="5" height="1.8" fill="#4e4e4e"/><rect x="1" y="612.5" width="8" height="1.8" fill="#5e5e5e"/><rect x="1" y="619.6" width="5" height="1.8" fill="#4e4e4e"/><rect x="1" y="626.6" width="5" height="1.8" fill="#4e4e4e"/><rect x="1" y="633.6" width="5" height="1.8" fill="#4e4e4e"/><rect x="1" y="640.5" width="5" height="1.8" fill="#4e4e4e"/><rect x="1" y="647.4" width="8" height="1.8" fill="#5e5e5e"/><rect x="1" y="654.5" width="5" height="1.8" fill="#4e4e4e"/><rect x="1" y="661.5" width="5" height="1.8" fill="#4e4e4e"/><rect x="1" y="668.5" width="5" height="1.8" fill="#4e4e4e"/><rect x="1" y="675.5" width="5" height="1.8" fill="#4e4e4e"/><rect x="1" y="682.3" width="8" height="1.8" fill="#5e5e5e"/><rect x="1" y="689.4" width="5" height="1.8" fill="#4e4e4e"/><rect x="1" y="696.4" width="5" height="1.8" fill="#4e4e4e"/><rect x="1" y="703.4" width="5" height="1.8" fill="#4e4e4e"/><rect x="1" y="710.4" width="5" height="1.8" fill="#4e4e4e"/><rect x="1" y="717.3" width="8" height="1.8" fill="#5e5e5e"/><rect x="1" y="724.4" width="5" height="1.8" fill="#4e4e4e"/><rect x="1" y="731.3" width="5" height="1.8" fill="#4e4e4e"/><rect x="1" y="738.3" width="5" height="1.8" fill="#4e4e4e"/><rect x="1" y="745.3" width="5" height="1.8" fill="#4e4e4e"/><rect x="1" y="752.2" width="8" height="1.8" fill="#5e5e5e"/><rect x="1" y="759.3" width="5" height="1.8" fill="#4e4e4e"/><rect x="1" y="766.3" width="5" height="1.8" fill="#4e4e4e"/><rect x="1" y="773.3" width="5" height="1.8" fill="#4e4e4e"/><rect x="1" y="780.2" width="5" height="1.8" fill="#4e4e4e"/><rect x="1" y="787.1" width="8" height="1.8" fill="#5e5e5e"/><rect x="1" y="794.2" width="5" height="1.8" fill="#4e4e4e"/><rect x="1" y="801.2" width="5" height="1.8" fill="#4e4e4e"/><rect x="1" y="808.2" width="5" height="1.8" fill="#4e4e4e"/><rect x="1" y="815.2" width="5" height="1.8" fill="#4e4e4e"/><rect x="1" y="822.0" width="8" height="1.8" fill="#5e5e5e"/><rect x="1" y="829.1" width="5" height="1.8" fill="#4e4e4e"/><rect x="1" y="836.1" width="5" height="1.8" fill="#4e4e4e"/><rect x="1" y="843.1" width="5" height="1.8" fill="#4e4e4e"/><rect x="1" y="850.1" width="5" height="1.8" fill="#4e4e4e"/><rect x="1" y="857.0" width="8" height="1.8" fill="#5e5e5e"/><rect x="1" y="864.1" width="5" height="1.8" fill="#4e4e4e"/><rect x="1" y="871.0" width="5" height="1.8" fill="#4e4e4e"/><rect x="1" y="878.0" width="5" height="1.8" fill="#4e4e4e"/><rect x="1" y="885.0" width="5" height="1.8" fill="#4e4e4e"/><rect x="1" y="891.9" width="8" height="1.8" fill="#5e5e5e"/><rect x="1" y="899.0" width="5" height="1.8" fill="#4e4e4e"/><rect x="1" y="906.0" width="5" height="1.8" fill="#4e4e4e"/><g font-family="Liberation Sans, sans-serif" font-size="9" font-weight="bold" fill="#cfcfcf"><text transform="translate(18.6 54.7) rotate(-90)" text-anchor="middle">0</text><text transform="translate(18.6 124.5) rotate(-90)" text-anchor="middle">100</text><text transform="translate(18.6 194.4) rotate(-90)" text-anchor="middle">200</text><text transform="translate(18.6 264.2) rotate(-90)" text-anchor="middle">300</text><text transform="translate(18.6 334.1) rotate(-90)" text-anchor="middle">400</text><text transform="translate(18.6 403.9) rotate(-90)" text-anchor="middle">500</text><text transform="translate(18.6 473.8) rotate(-90)" text-anchor="middle">600</text><text transform="translate(18.6 543.6) rotate(-90)" text-anchor="middle">700</text><text transform="translate(18.6 613.5) rotate(-90)" text-anchor="middle">800</text><text transform="translate(18.6 683.3) rotate(-90)" text-anchor="middle">900</text><text transform="translate(18.6 753.2) rotate(-90)" text-anchor="middle">1000</text><text transform="translate(18.6 823.0) rotate(-90)" text-anchor="middle">1100</text><text transform="translate(18.6 892.9) rotate(-90)" text-anchor="middle">1200</text></g></svg>
<div class="r" style="left:253px;top:76px;width:1px;height:916px;background:#18191b;"></div>
<div class="r" style="left:254px;top:77px;width:24px;height:26px;background:#1e1e1e;"></div>
<div class="t" style="left:256px;top:84px;width:20px;height:12px;font-size:9px;line-height:12px;color:#505050;transform:rotate(-90deg);text-align:center;font-weight:bold">-10</div>
<div class="r" style="left:278px;top:103px;width:1341px;height:889px;background:#131416;background-image:radial-gradient(circle at 9px 7px,#424242 0.9px,transparent 1.2px);background-size:18px 18px"></div>
<svg class="r" style="left:278px;top:162px;" width="1341" height="750" viewBox="0 0 1341 750"><defs>
<linearGradient id="sky" x1="0" y1="0" x2="0" y2="1"><stop offset="0" stop-color="#c6d3db"/><stop offset="1" stop-color="#dde1e2"/></linearGradient>
<linearGradient id="band" x1="0" y1="0" x2="0" y2="1"><stop offset="0" stop-color="#5a78a6"/><stop offset="0.04" stop-color="#3e5682"/><stop offset="0.14" stop-color="#263552"/><stop offset="0.32" stop-color="#172139"/><stop offset="0.6" stop-color="#10172a"/><stop offset="1" stop-color="#0a0f1b"/></linearGradient>
<linearGradient id="flr" x1="0" y1="0" x2="0" y2="1"><stop offset="0" stop-color="#c3bbb6"/><stop offset="0.4" stop-color="#bbb3ac"/><stop offset="1" stop-color="#b9b0a7"/></linearGradient>
<linearGradient id="fog" x1="0" y1="0" x2="0" y2="1"><stop offset="0" stop-color="#c1b9b4" stop-opacity="1"/><stop offset="0.19" stop-color="#bcb4ae" stop-opacity="0.88"/><stop offset="0.38" stop-color="#bbb3ac" stop-opacity="0.7"/><stop offset="0.57" stop-color="#bab2ab" stop-opacity="0.5"/><stop offset="0.76" stop-color="#b9b1a9" stop-opacity="0.28"/><stop offset="0.95" stop-color="#b9b0a8" stop-opacity="0.05"/></linearGradient>
<clipPath id="fc"><path d="M0 173L571 133.3L1341 172V750H0Z"/></clipPath>
</defs>
<rect x="0" y="0" width="1341" height="81" fill="url(#sky)"/>
<rect x="0" y="80" width="1341" height="100" fill="url(#band)"/>
<g clip-path="url(#fc)">
<rect x="0" y="120" width="1341" height="630" fill="url(#flr)"/>
<g transform="translate(-278 -162)">
<path d="M847.7 295.4L17760.4 1100.0M844.1 295.6L17627.1 1100.0M842.4 295.7L17560.4 1100.0M840.6 295.8L17493.8 1100.0M837.0 296.1L17360.4 1100.0M835.3 296.2L17293.8 1100.0M833.4 296.3L17227.1 1100.0M829.8 296.5L17093.8 1100.0M828.0 296.6L17027.1 1100.0M826.2 296.8L16960.5 1100.0M822.5 297.0L16827.1 1100.0M820.6 297.1L16760.5 1100.0M818.7 297.2L16693.8 1100.0M815.0 297.5L16560.5 1100.0M813.1 297.6L16493.8 1100.0M811.2 297.7L16427.2 1100.0M807.4 298.0L16293.8 1100.0M805.4 298.1L16227.2 1100.0M803.5 298.2L16160.5 1100.0M799.6 298.5L16027.2 1100.0M797.7 298.6L15960.5 1100.0M795.7 298.7L15893.9 1100.0M791.7 299.0L15760.6 1100.0M789.7 299.1L15693.9 1100.0M787.7 299.2L15627.2 1100.0M783.7 299.5L15493.9 1100.0M781.7 299.6L15427.2 1100.0M779.6 299.8L15360.6 1100.0M775.5 300.0L15227.3 1100.0M773.4 300.2L15160.6 1100.0M771.4 300.3L15093.9 1100.0M767.2 300.6L14960.6 1100.0M765.1 300.7L14893.9 1100.0M762.9 300.8L14827.3 1100.0M758.7 301.1L14694.0 1100.0M756.5 301.2L14627.3 1100.0M754.4 301.4L14560.6 1100.0M750.0 301.7L14427.3 1100.0M747.8 301.8L14360.6 1100.0M745.6 301.9L14294.0 1100.0M741.2 302.2L14160.7 1100.0M738.9 302.4L14094.0 1100.0M736.7 302.5L14027.3 1100.0M732.2 302.8L13894.0 1100.0M729.9 303.0L13827.3 1100.0M727.6 303.1L13760.7 1100.0M723.0 303.4L13627.4 1100.0M720.7 303.6L13560.7 1100.0M718.4 303.7L13494.0 1100.0M713.7 304.0L13360.7 1100.0M711.3 304.2L13294.1 1100.0M708.9 304.3L13227.4 1100.0M704.1 304.6L13094.1 1100.0M701.7 304.8L13027.4 1100.0M699.3 304.9L12960.7 1100.0M694.4 305.3L12827.4 1100.0M691.9 305.4L12760.8 1100.0M689.4 305.6L12694.1 1100.0M684.4 305.9L12560.8 1100.0M681.9 306.1L12494.1 1100.0M679.4 306.2L12427.4 1100.0M674.3 306.5L12294.1 1100.0M671.7 306.7L12227.5 1100.0M669.2 306.9L12160.8 1100.0M664.0 307.2L12027.5 1100.0M661.3 307.4L11960.8 1100.0M658.7 307.6L11894.1 1100.0M653.4 307.9L11760.8 1100.0M650.7 308.1L11694.2 1100.0M648.0 308.2L11627.5 1100.0M642.6 308.6L11494.2 1100.0M639.9 308.8L11427.5 1100.0M637.1 308.9L11360.9 1100.0M631.6 309.3L11227.5 1100.0M628.8 309.5L11160.9 1100.0M626.0 309.7L11094.2 1100.0M620.3 310.0L10960.9 1100.0M617.4 310.2L10894.2 1100.0M614.6 310.4L10827.6 1100.0M608.8 310.8L10694.2 1100.0M605.9 311.0L10627.6 1100.0M602.9 311.1L10560.9 1100.0M597.0 311.5L10427.6 1100.0M594.0 311.7L10360.9 1100.0M591.0 311.9L10294.3 1100.0M585.0 312.3L10160.9 1100.0M581.9 312.5L10094.3 1100.0M578.9 312.7L10027.6 1100.0M572.7 313.1L9894.3 1100.0M569.6 313.3L9827.6 1100.0M566.4 313.5L9761.0 1100.0M560.1 313.9L9627.6 1100.0M556.9 314.1L9561.0 1100.0M553.7 314.3L9494.3 1100.0M547.2 314.7L9361.0 1100.0M543.9 314.9L9294.3 1100.0M540.7 315.2L9227.7 1100.0M534.0 315.6L9094.3 1100.0M530.7 315.8L9027.7 1100.0M527.3 316.0L8961.0 1100.0M520.5 316.5L8827.7 1100.0M517.1 316.7L8761.0 1100.0M513.6 316.9L8694.4 1100.0M506.7 317.4L8561.0 1100.0M503.2 317.6L8494.4 1100.0M499.7 317.8L8427.7 1100.0M492.5 318.3L8294.4 1100.0M488.9 318.5L8227.7 1100.0M485.3 318.7L8161.1 1100.0M478.0 319.2L8027.7 1100.0M474.3 319.4L7961.1 1100.0M470.6 319.7L7894.4 1100.0M463.1 320.2L7761.1 1100.0M459.4 320.4L7694.4 1100.0M455.6 320.6L7627.8 1100.0M447.9 321.1L7494.4 1100.0M444.0 321.4L7427.8 1100.0M440.1 321.6L7361.1 1100.0M432.2 322.2L7227.8 1100.0M428.3 322.4L7161.1 1100.0M424.3 322.7L7094.5 1100.0M416.2 323.2L6961.2 1100.0M412.1 323.4L6894.5 1100.0M408.0 323.7L6827.8 1100.0M399.7 324.2L6694.5 1100.0M395.5 324.5L6627.8 1100.0M391.3 324.8L6561.2 1100.0M382.8 325.3L6427.9 1100.0M378.5 325.6L6361.2 1100.0M374.2 325.9L6294.5 1100.0M365.4 326.5L6161.2 1100.0M361.0 326.7L6094.5 1100.0M356.6 327.0L6027.9 1100.0M347.6 327.6L5894.6 1100.0M343.1 327.9L5827.9 1100.0M338.5 328.2L5761.2 1100.0M329.3 328.8L5627.9 1100.0M324.6 329.1L5561.2 1100.0M319.9 329.4L5494.6 1100.0M310.4 330.0L5361.3 1100.0M305.6 330.3L5294.6 1100.0M300.8 330.6L5227.9 1100.0M291.0 331.3L5094.6 1100.0M286.1 331.6L5027.9 1100.0M281.1 331.9L4961.3 1100.0M271.0 332.5L4828.0 1100.0M266.0 332.9L4761.3 1100.0M260.8 333.2L4694.6 1100.0M250.5 333.9L4561.3 1100.0M245.3 334.2L4494.7 1100.0M240.0 334.5L4428.0 1100.0M229.3 335.2L4294.7 1100.0M224.0 335.6L4228.0 1100.0M218.5 335.9L4161.3 1100.0M207.5 336.6L4028.0 1100.0M202.0 337.0L3961.4 1100.0M196.4 337.4L3894.7 1100.0M185.1 338.1L3761.4 1100.0M179.3 338.5L3694.7 1100.0M173.6 338.8L3628.0 1100.0M161.9 339.6L3494.7 1100.0M156.0 340.0L3428.1 1100.0M150.0 340.3L3361.4 1100.0M138.0 341.1L3228.1 1100.0M131.9 341.5L3161.4 1100.0M125.7 341.9L3094.7 1100.0M113.3 342.7L2961.4 1100.0M107.0 343.1L2894.8 1100.0M100.7 343.5L2828.1 1100.0M87.8 344.4L2694.8 1100.0M81.3 344.8L2628.1 1100.0M74.7 345.2L2561.5 1100.0M61.5 346.1L2428.1 1100.0M54.7 346.5L2361.5 1100.0M48.0 346.9L2294.8 1100.0M34.2 347.8L2161.5 1100.0M27.3 348.3L2094.8 1100.0M20.3 348.7L2028.2 1100.0M6.1 349.6L1894.8 1100.0M-1.1 350.1L1828.2 1100.0M-8.4 350.6L1761.5 1100.0M-23.1 351.5L1628.2 1100.0M-30.6 352.0L1561.5 1100.0M-38.1 352.5L1494.9 1100.0M-53.3 353.5L1361.5 1100.0M-61.0 354.0L1294.9 1100.0M-68.8 354.5L1228.2 1100.0M-84.6 355.5L1094.9 1100.0M-92.6 356.0L1028.2 1100.0M-100.7 356.5L961.6 1100.0M-117.1 357.6L828.2 1100.0M-125.4 358.1L761.6 1100.0M-133.8 358.6L694.9 1100.0M-150.8 359.7L561.6 1100.0M-159.4 360.3L494.9 1100.0M-168.1 360.9L428.3 1100.0M-185.8 362.0L294.9 1100.0M-194.7 362.6L228.3 1100.0M-203.8 363.2L161.6 1100.0M849.1 295.3L-11622.4 1100.0M852.7 295.5L-11519.6 1100.0M854.6 295.6L-11468.2 1100.0M856.4 295.7L-11416.8 1100.0M860.1 295.8L-11314.0 1100.0M862.0 295.9L-11262.6 1100.0M863.8 296.0L-11211.2 1100.0M867.6 296.2L-11108.5 1100.0M869.5 296.3L-11057.1 1100.0M871.4 296.4L-11005.7 1100.0M875.2 296.6L-10902.9 1100.0M877.1 296.6L-10851.5 1100.0M879.0 296.7L-10800.1 1100.0M882.9 296.9L-10697.3 1100.0M884.8 297.0L-10645.9 1100.0M886.8 297.1L-10594.5 1100.0M890.7 297.3L-10491.7 1100.0M892.7 297.4L-10440.3 1100.0M894.6 297.5L-10388.9 1100.0M898.6 297.7L-10286.2 1100.0M900.6 297.8L-10234.8 1100.0M902.6 297.9L-10183.4 1100.0M906.6 298.1L-10080.6 1100.0M908.6 298.1L-10029.2 1100.0M910.7 298.2L-9977.8 1100.0M914.7 298.4L-9875.0 1100.0M916.8 298.5L-9823.6 1100.0M918.8 298.6L-9772.2 1100.0M923.0 298.8L-9669.4 1100.0M925.0 298.9L-9618.0 1100.0M927.1 299.0L-9566.7 1100.0M931.3 299.2L-9463.9 1100.0M933.4 299.3L-9412.5 1100.0M935.5 299.4L-9361.1 1100.0M939.8 299.6L-9258.3 1100.0M941.9 299.7L-9206.9 1100.0M944.1 299.8L-9155.5 1100.0M948.4 300.0L-9052.7 1100.0M950.6 300.1L-9001.3 1100.0M952.7 300.2L-8949.9 1100.0M957.1 300.4L-8847.1 1100.0M959.3 300.6L-8795.8 1100.0M961.5 300.7L-8744.4 1100.0M966.0 300.9L-8641.6 1100.0M968.2 301.0L-8590.2 1100.0M970.4 301.1L-8538.8 1100.0M974.9 301.3L-8436.0 1100.0M977.2 301.4L-8384.6 1100.0M979.5 301.5L-8333.2 1100.0M984.0 301.7L-8230.4 1100.0M986.3 301.8L-8179.0 1100.0M988.6 301.9L-8127.6 1100.0M993.3 302.2L-8024.8 1100.0M995.6 302.3L-7973.5 1100.0M997.9 302.4L-7922.1 1100.0M1002.7 302.6L-7819.3 1100.0M1005.0 302.7L-7767.9 1100.0M1007.4 302.8L-7716.5 1100.0M1012.2 303.1L-7613.7 1100.0M1014.6 303.2L-7562.3 1100.0M1017.0 303.3L-7510.9 1100.0M1021.8 303.5L-7408.1 1100.0M1024.3 303.6L-7356.7 1100.0M1026.7 303.8L-7305.3 1100.0M1031.6 304.0L-7202.6 1100.0M1034.1 304.1L-7151.2 1100.0M1036.6 304.2L-7099.8 1100.0M1041.6 304.5L-6997.0 1100.0M1044.1 304.6L-6945.6 1100.0M1046.6 304.7L-6894.2 1100.0M1051.7 304.9L-6791.4 1100.0M1054.3 305.1L-6740.0 1100.0M1056.8 305.2L-6688.6 1100.0M1062.0 305.4L-6585.8 1100.0M1064.6 305.5L-6534.4 1100.0M1067.2 305.7L-6483.0 1100.0M1072.4 305.9L-6380.3 1100.0M1075.1 306.0L-6328.9 1100.0M1077.7 306.2L-6277.5 1100.0M1083.0 306.4L-6174.7 1100.0M1085.7 306.6L-6123.3 1100.0M1088.4 306.7L-6071.9 1100.0M1093.8 306.9L-5969.1 1100.0M1096.5 307.1L-5917.7 1100.0M1099.3 307.2L-5866.3 1100.0M1104.8 307.5L-5763.5 1100.0M1107.5 307.6L-5712.1 1100.0M1110.3 307.7L-5660.7 1100.0M1115.9 308.0L-5558.0 1100.0M1118.7 308.1L-5506.6 1100.0M1121.5 308.3L-5455.2 1100.0M1127.2 308.5L-5352.4 1100.0M1130.0 308.7L-5301.0 1100.0M1132.9 308.8L-5249.6 1100.0M1138.7 309.1L-5146.8 1100.0M1141.6 309.2L-5095.4 1100.0M1144.5 309.3L-5044.0 1100.0M1150.4 309.6L-4941.2 1100.0M1153.3 309.8L-4889.8 1100.0M1156.3 309.9L-4838.4 1100.0M1162.2 310.2L-4735.7 1100.0M1165.2 310.3L-4684.3 1100.0M1168.3 310.5L-4632.9 1100.0M1174.3 310.8L-4530.1 1100.0M1177.4 310.9L-4478.7 1100.0M1180.4 311.0L-4427.3 1100.0M1186.6 311.3L-4324.5 1100.0M1189.7 311.5L-4273.1 1100.0M1192.8 311.6L-4221.7 1100.0M1199.1 311.9L-4118.9 1100.0M1202.3 312.1L-4067.5 1100.0M1205.4 312.2L-4016.2 1100.0M1211.8 312.5L-3913.4 1100.0M1215.0 312.7L-3862.0 1100.0M1218.3 312.8L-3810.6 1100.0M1224.8 313.2L-3707.8 1100.0M1228.0 313.3L-3656.4 1100.0M1231.3 313.5L-3605.0 1100.0M1237.9 313.8L-3502.2 1100.0M1241.3 313.9L-3450.8 1100.0M1244.6 314.1L-3399.4 1100.0M1251.3 314.4L-3296.6 1100.0M1254.7 314.6L-3245.3 1100.0M1258.1 314.7L-3193.9 1100.0M1265.0 315.1L-3091.1 1100.0M1268.4 315.2L-3039.7 1100.0M1271.9 315.4L-2988.3 1100.0M1278.9 315.7L-2885.5 1100.0M1282.4 315.9L-2834.1 1100.0M1285.9 316.1L-2782.7 1100.0M1293.0 316.4L-2679.9 1100.0M1296.6 316.6L-2628.5 1100.0M1300.2 316.7L-2577.1 1100.0M1307.4 317.1L-2474.3 1100.0M1311.1 317.3L-2423.0 1100.0M1314.7 317.4L-2371.6 1100.0M1322.1 317.8L-2268.8 1100.0M1325.8 318.0L-2217.4 1100.0M1329.6 318.1L-2166.0 1100.0M1337.1 318.5L-2063.2 1100.0M1340.9 318.7L-2011.8 1100.0M1344.7 318.8L-1960.4 1100.0M1352.3 319.2L-1857.6 1100.0M1356.2 319.4L-1806.2 1100.0M1360.0 319.6L-1754.8 1100.0M1367.9 319.9L-1652.1 1100.0M1371.8 320.1L-1600.7 1100.0M1375.7 320.3L-1549.3 1100.0M1383.7 320.7L-1446.5 1100.0M1387.7 320.9L-1395.1 1100.0M1391.7 321.1L-1343.7 1100.0M1399.8 321.5L-1240.9 1100.0M1403.9 321.7L-1189.5 1100.0M1408.0 321.9L-1138.1 1100.0M1416.3 322.2L-1035.3 1100.0M1420.5 322.4L-983.9 1100.0M1424.7 322.6L-932.5 1100.0M1433.1 323.0L-829.8 1100.0M1437.4 323.2L-778.4 1100.0M1441.6 323.4L-727.0 1100.0M1450.2 323.9L-624.2 1100.0M1454.6 324.1L-572.8 1100.0M1458.9 324.3L-521.4 1100.0M1467.7 324.7L-418.6 1100.0M1472.1 324.9L-367.2 1100.0M1476.6 325.1L-315.8 1100.0M1485.6 325.5L-213.0 1100.0M1490.1 325.7L-161.6 1100.0M1494.6 326.0L-110.2 1100.0M1503.8 326.4L-7.5 1100.0M1508.4 326.6L43.9 1100.0M1513.0 326.8L95.3 1100.0M1522.4 327.3L198.1 1100.0M1527.1 327.5L249.5 1100.0M1531.8 327.7L300.9 1100.0M1541.4 328.2L403.7 1100.0M1546.2 328.4L455.1 1100.0M1551.0 328.6L506.5 1100.0M1560.8 329.1L609.3 1100.0M1565.7 329.3L660.7 1100.0M1570.6 329.6L712.1 1100.0M1580.6 330.0L814.8 1100.0M1585.6 330.3L866.2 1100.0M1590.7 330.5L917.6 1100.0M1600.9 331.0L1020.4 1100.0M1606.0 331.3L1071.8 1100.0M1611.2 331.5L1123.2 1100.0M1621.6 332.0L1226.0 1100.0M1626.8 332.2L1277.4 1100.0M1632.1 332.5L1328.8 1100.0M1642.8 333.0L1431.6 1100.0M1648.1 333.3L1483.0 1100.0M1653.5 333.5L1534.3 1100.0M1664.4 334.0L1637.1 1100.0M1669.9 334.3L1688.5 1100.0M1675.4 334.5L1739.9 1100.0M1686.6 335.1L1842.7 1100.0M1692.2 335.3L1894.1 1100.0M1697.8 335.6L1945.5 1100.0" stroke="#a69e96" stroke-width="0.7" fill="none"/>
<path d="M845.9 295.5L17693.8 1100.0M838.8 295.9L17427.1 1100.0M831.6 296.4L17160.5 1100.0M824.3 296.9L16893.8 1100.0M816.9 297.4L16627.2 1100.0M809.3 297.8L16360.5 1100.0M801.6 298.3L16093.9 1100.0M793.7 298.8L15827.2 1100.0M785.7 299.4L15560.6 1100.0M777.6 299.9L15293.9 1100.0M769.3 300.4L15027.3 1100.0M760.8 301.0L14760.6 1100.0M752.2 301.5L14494.0 1100.0M743.4 302.1L14227.3 1100.0M734.4 302.7L13960.7 1100.0M725.3 303.3L13694.0 1100.0M716.0 303.9L13427.4 1100.0M706.5 304.5L13160.7 1100.0M696.8 305.1L12894.1 1100.0M686.9 305.7L12627.4 1100.0M676.9 306.4L12360.8 1100.0M666.6 307.0L12094.1 1100.0M656.0 307.7L11827.5 1100.0M645.3 308.4L11560.8 1100.0M634.3 309.1L11294.2 1100.0M623.1 309.8L11027.5 1100.0M611.7 310.6L10760.9 1100.0M600.0 311.3L10494.2 1100.0M588.0 312.1L10227.6 1100.0M575.8 312.9L9960.9 1100.0M563.3 313.7L9694.3 1100.0M550.5 314.5L9427.6 1100.0M537.3 315.4L9161.0 1100.0M523.9 316.2L8894.4 1100.0M510.2 317.1L8627.7 1100.0M496.1 318.0L8361.1 1100.0M481.7 319.0L8094.4 1100.0M466.9 319.9L7827.8 1100.0M451.7 320.9L7561.1 1100.0M436.2 321.9L7294.5 1100.0M420.2 322.9L7027.8 1100.0M403.9 324.0L6761.2 1100.0M387.1 325.1L6494.5 1100.0M369.8 326.2L6227.9 1100.0M352.1 327.3L5961.2 1100.0M333.9 328.5L5694.6 1100.0M315.2 329.7L5427.9 1100.0M295.9 330.9L5161.3 1100.0M276.1 332.2L4894.6 1100.0M255.7 333.5L4628.0 1100.0M234.7 334.9L4361.3 1100.0M213.0 336.3L4094.7 1100.0M190.7 337.7L3828.0 1100.0M167.8 339.2L3561.4 1100.0M144.0 340.7L3294.7 1100.0M119.5 342.3L3028.1 1100.0M94.3 343.9L2761.4 1100.0M68.1 345.6L2494.8 1100.0M41.1 347.4L2228.1 1100.0M13.2 349.2L1961.5 1100.0M-15.7 351.0L1694.8 1100.0M-45.7 353.0L1428.2 1100.0M-76.7 355.0L1161.5 1100.0M-108.9 357.0L894.9 1100.0M-142.2 359.2L628.2 1100.0M-176.9 361.4L361.6 1100.0M-212.9 363.7L95.0 1100.0M850.9 295.4L-11571.0 1100.0M858.3 295.8L-11365.4 1100.0M865.7 296.1L-11159.9 1100.0M873.3 296.5L-10954.3 1100.0M881.0 296.8L-10748.7 1100.0M888.7 297.2L-10543.1 1100.0M896.6 297.6L-10337.6 1100.0M904.6 298.0L-10132.0 1100.0M912.7 298.3L-9926.4 1100.0M920.9 298.7L-9720.8 1100.0M929.2 299.1L-9515.3 1100.0M937.7 299.5L-9309.7 1100.0M946.2 299.9L-9104.1 1100.0M954.9 300.3L-8898.5 1100.0M963.7 300.8L-8693.0 1100.0M972.7 301.2L-8487.4 1100.0M981.7 301.6L-8281.8 1100.0M991.0 302.1L-8076.2 1100.0M1000.3 302.5L-7870.7 1100.0M1009.8 302.9L-7665.1 1100.0M1019.4 303.4L-7459.5 1100.0M1029.2 303.9L-7253.9 1100.0M1039.1 304.3L-7048.4 1100.0M1049.2 304.8L-6842.8 1100.0M1059.4 305.3L-6637.2 1100.0M1069.8 305.8L-6431.6 1100.0M1080.4 306.3L-6226.1 1100.0M1091.1 306.8L-6020.5 1100.0M1102.0 307.3L-5814.9 1100.0M1113.1 307.9L-5609.4 1100.0M1124.3 308.4L-5403.8 1100.0M1135.8 308.9L-5198.2 1100.0M1147.4 309.5L-4992.6 1100.0M1159.3 310.0L-4787.1 1100.0M1171.3 310.6L-4581.5 1100.0M1183.5 311.2L-4375.9 1100.0M1196.0 311.8L-4170.3 1100.0M1208.6 312.4L-3964.8 1100.0M1221.5 313.0L-3759.2 1100.0M1234.6 313.6L-3553.6 1100.0M1248.0 314.3L-3348.0 1100.0M1261.6 314.9L-3142.5 1100.0M1275.4 315.6L-2936.9 1100.0M1289.5 316.2L-2731.3 1100.0M1303.8 316.9L-2525.7 1100.0M1318.4 317.6L-2320.2 1100.0M1333.3 318.3L-2114.6 1100.0M1348.5 319.0L-1909.0 1100.0M1363.9 319.8L-1703.4 1100.0M1379.7 320.5L-1497.9 1100.0M1395.8 321.3L-1292.3 1100.0M1412.2 322.0L-1086.7 1100.0M1428.9 322.8L-881.1 1100.0M1445.9 323.7L-675.6 1100.0M1463.3 324.5L-470.0 1100.0M1481.1 325.3L-264.4 1100.0M1499.2 326.2L-58.9 1100.0M1517.7 327.1L146.7 1100.0M1536.6 328.0L352.3 1100.0M1555.9 328.9L557.9 1100.0M1575.6 329.8L763.4 1100.0M1595.8 330.8L969.0 1100.0M1616.4 331.7L1174.6 1100.0M1637.4 332.7L1380.2 1100.0M1659.0 333.8L1585.7 1100.0M1681.0 334.8L1791.3 1100.0M1703.5 335.9L1996.9 1100.0" stroke="#8a827a" stroke-width="1" fill="none"/>
</g>
<rect x="0" y="120" width="1341" height="630" fill="url(#fog)"/>
</g></svg>
<div class="r" style="left:278px;top:101px;width:1px;height:891px;background:#8e8e8e;"></div>
<div class="r" style="left:879.5px;top:528.5px;width:138px;height:36px;background:rgba(140,175,225,0.22);border:1.8px solid #1a8cff;box-sizing:border-box;box-shadow:inset 0 0 9px rgba(50,125,235,0.45)"></div>
<div class="t" style="left:880px;top:539px;font-size:13px;line-height:15px;color:#d6e6f6;font-weight:normal;width:137px;text-align:center">功能按钮</div>
<div class="r" style="left:875.5px;top:524px;width:10px;height:10px;background:#ffffff;border:1.5px solid #1a8cff;border-radius:50%;box-sizing:border-box"></div>
<div class="r" style="left:943.5px;top:524px;width:10px;height:10px;background:#ffffff;border:1.5px solid #1a8cff;border-radius:50%;box-sizing:border-box"></div>
<div class="r" style="left:1011.5px;top:524px;width:10px;height:10px;background:#ffffff;border:1.5px solid #1a8cff;border-radius:50%;box-sizing:border-box"></div>
<div class="r" style="left:875.5px;top:541.3px;width:10px;height:10px;background:#ffffff;border:1.5px solid #1a8cff;border-radius:50%;box-sizing:border-box"></div>
<div class="r" style="left:1011.5px;top:541.3px;width:10px;height:10px;background:#ffffff;border:1.5px solid #1a8cff;border-radius:50%;box-sizing:border-box"></div>
<div class="r" style="left:875.5px;top:558.5px;width:10px;height:10px;background:#ffffff;border:1.5px solid #1a8cff;border-radius:50%;box-sizing:border-box"></div>
<div class="r" style="left:943.5px;top:558.5px;width:10px;height:10px;background:#ffffff;border:1.5px solid #1a8cff;border-radius:50%;box-sizing:border-box"></div>
<div class="r" style="left:1011.5px;top:558.5px;width:10px;height:10px;background:#ffffff;border:1.5px solid #1a8cff;border-radius:50%;box-sizing:border-box"></div>
<div class="r" style="left:254px;top:992px;width:1366px;height:40px;background:#1e1e1e;"></div>
<div class="r" style="left:254px;top:992px;width:1px;height:40px;background:#262729;"></div>
<div class="r" style="left:318px;top:992px;width:1px;height:40px;background:#262729;"></div>
<div class="r" style="left:446px;top:992px;width:1px;height:40px;background:#262729;"></div>
<div class="r" style="left:479px;top:992px;width:1px;height:40px;background:#262729;"></div>
<div class="r" style="left:543px;top:992px;width:1px;height:40px;background:#262729;"></div>
<div class="r" style="left:319px;top:992px;width:127px;height:2px;background:#1a8cff;"></div>
<div class="t" style="left:265px;top:1006px;font-size:12px;line-height:14px;color:#f0f0f0;font-weight:bold;">前景</div>
<svg class="r" style="left:297px;top:999px;" width="14" height="14" viewBox="0 0 14 14"><circle cx="7" cy="7" r="6.2" fill="none" stroke="#e0e0e0" stroke-width="1.1"/><path d="M7 4V10M4 7H10" stroke="#e0e0e0" stroke-width="1.1"/></svg>
<svg class="r" style="left:329px;top:1009px;" width="12" height="11" viewBox="0 0 12 11"><path d="M0.7 0.7H11.3 M1.7 0.7V7.3H10.3V0.7 M3.5 7.3L2.5 10.5 M8.5 7.3L9.5 10.5" fill="none" stroke="#1a8cff" stroke-width="1.2"/></svg>
<div class="t" style="left:346px;top:1007px;font-size:12px;line-height:14px;color:#1a8cff;font-weight:normal;">子看板1</div>
<svg class="r" style="left:456px;top:1006px;" width="14" height="14" viewBox="0 0 14 14"><path d="M7 0.5V13.5M0.5 7H13.5" stroke="#f0f0f0" stroke-width="2"/></svg>
<div class="t" style="left:490px;top:1006px;font-size:12px;line-height:14px;color:#f0f0f0;font-weight:bold;">背景</div>
<svg class="r" style="left:521px;top:999px;" width="14" height="14" viewBox="0 0 14 14"><circle cx="7" cy="7" r="6.2" fill="none" stroke="#e0e0e0" stroke-width="1.1"/><path d="M7 4V10M4 7H10" stroke="#e0e0e0" stroke-width="1.1"/></svg>
<div class="r" style="left:1620px;top:76px;width:300px;height:956px;background:#141517;"></div>
<div class="r" style="left:1620px;top:115px;width:300px;height:1px;background:#262729;"></div>
<svg class="r" style="left:1633px;top:90px;" width="11" height="14" viewBox="0 0 11 14"><path d="M0.6 0.6H10.4V13.4H0.6Z M3 0.6V13.4 M5 4H8.5 M5 7H8.5 M5 10H8.5" fill="none" stroke="#a0a0a0" stroke-width="1.1"/></svg>
<div class="t" style="left:1646px;top:89px;font-size:12px;line-height:14px;color:#b8b8b8;font-weight:normal;">子看板1</div>
<svg class="r" style="left:1690px;top:92px;" width="6" height="10" viewBox="0 0 6 10"><path d="M0.8 0.8L4.8 5L0.8 9.2" fill="none" stroke="#a0a0a0" stroke-width="1.1"/></svg>
<div class="t" style="left:1698px;top:89px;font-size:12px;line-height:14px;color:#ffffff;font-weight:bold;">按钮</div>
<div class="t" style="left:1638px;top:126px;font-size:12px;line-height:14px;color:#e8e8e8;font-weight:bold;">样式</div>
<div class="t" style="left:1678px;top:126px;font-size:12px;line-height:14px;color:#ffffff;font-weight:bold;">交互</div>
<div class="t" style="left:1718px;top:126px;font-size:12px;line-height:14px;color:#e8e8e8;font-weight:bold;">数据</div>
<div class="t" style="left:1758px;top:126px;font-size:12px;line-height:14px;color:#e8e8e8;font-weight:bold;">代码</div>
<div class="r" style="left:1668px;top:150px;width:39px;height:3px;background:#0a8cff;"></div>
<div class="r" style="left:1824px;top:122px;width:80px;height:24px;background:#222324;border-radius:3px"></div>
<div class="t" style="left:1832px;top:126px;font-size:12px;line-height:14px;color:#f0f0f0;font-weight:bold;">默认状态</div>
<svg class="r" style="left:1886px;top:131px;" width="11" height="7" viewBox="0 0 11 7"><path d="M0.8 0.8L5.5 5.5L10.2 0.8" fill="none" stroke="#e0e0e0" stroke-width="1.4"/></svg>
<div class="r" style="left:1620px;top:153px;width:300px;height:35px;background:#1e1e1e;"></div>
<div class="t" style="left:1636px;top:163px;font-size:12px;line-height:14px;color:#e0e0e0;font-weight:normal;">交互设置</div>
<svg class="r" style="left:1897px;top:162px;" width="6" height="16" viewBox="0 0 6 16"><circle cx="3" cy="2.5" r="1.6" fill="#d0d0d0"/><circle cx="3" cy="8" r="1.6" fill="#d0d0d0"/><circle cx="3" cy="13.5" r="1.6" fill="#d0d0d0"/></svg>
<div class="r" style="left:1639px;top:202px;width:257px;height:32px;background:#0a8cff;border-radius:3px"></div>
<svg class="r" style="left:1733px;top:211px;" width="14" height="14" viewBox="0 0 14 14"><path d="M7 0.5V13.5M0.5 7H13.5" stroke="#dce9ff" stroke-width="1.4"/></svg>
<div class="t" style="left:1747px;top:209px;font-size:14px;line-height:16px;color:#ffffff;font-weight:normal;">添加交互</div>
<div class="r" style="left:1638px;top:258px;width:124px;height:26px;background:#1b1c1e;border:1px solid #1a8cff;border-radius:2px;box-sizing:border-box"></div>
<svg class="r" style="left:1650px;top:264px;" width="11" height="14" viewBox="0 0 11 14"><path d="M1 1L10 6L6 7L9 12L7.5 13L4.5 8L1 11Z" fill="#1a8cff"/></svg>
<div class="t" style="left:1665px;top:263px;font-size:12px;line-height:14px;color:#1a8cff;font-weight:normal;">点击</div>
<div class="r" style="left:1626px;top:304px;width:119px;height:1px;background:#3a3a3a;"></div>
<div class="r" style="left:1790px;top:304px;width:120px;height:1px;background:#3a3a3a;"></div>
<div class="t" style="left:1753px;top:297px;font-size:12px;line-height:14px;color:#d8d8d8;font-weight:normal;">点击</div>
<div class="r" style="left:1625px;top:321px;width:285px;height:48px;background:#1c1d1f;border:1px solid #1a8cff;border-radius:4px;box-sizing:border-box"></div>
<div class="r" style="left:1663px;top:327px;width:1px;height:36px;background:#3c3c3c;"></div>
<div class="r" style="left:1880px;top:327px;width:1px;height:36px;background:#3c3c3c;"></div>
<svg class="r" style="left:1636px;top:339px;" width="18" height="13" viewBox="0 0 18 13"><path d="M1 1.5C4 1.5 6 4 8 6.5M1 11.5C4 11.5 6 9 8 6.5H15.5M12.5 3.5L15.5 6.5L12.5 9.5" fill="none" stroke="#dcdcdc" stroke-width="1.6" stroke-linecap="round" stroke-linejoin="round"/></svg>
<div class="t" style="left:1673px;top:329px;font-size:13px;line-height:15px;color:#e8e8e8;font-weight:normal;">1. 面积测绘</div>
<div class="t" style="left:1673px;top:347px;font-size:12px;line-height:14px;color:#b0b0b0;font-weight:normal;">目标组件: 场景</div>
<svg class="r" style="left:1890px;top:328px;" width="9" height="9" viewBox="0 0 9 9"><path d="M0.8 0.8L8.2 8.2M8.2 0.8L0.8 8.2" stroke="#c0c0c0" stroke-width="1.1"/></svg>
<svg class="r" style="left:1889px;top:347px;" width="11" height="11" viewBox="0 0 11 11"><path d="M3 0.6H10.4V8H8 M0.6 3H8V10.4H0.6Z" fill="none" stroke="#b0b0b0" stroke-width="1.1"/></svg>
<div class="r" style="left:1620px;top:992px;width:300px;height:40px;background:#1e1e1e;"></div>
<div class="t" style="left:1623px;top:995px;font-size:11px;line-height:13px;color:#d8d8d8;font-weight:normal;">内存：220 / 3866 / 4096 MB&nbsp;&nbsp;59 / 279 MB</div>
<div class="t" style="left:1872px;top:995px;font-size:11px;line-height:13px;color:#d8d8d8;font-weight:normal;letter-spacing:0.3px">FPS：60</div>
<div class="t" style="left:1623px;top:1017px;font-size:11px;line-height:13px;color:#d8d8d8;font-weight:normal;">组件数: 2 / 2</div>
<div class="t" style="left:1893px;top:1017px;font-size:11px;line-height:13px;color:#d8d8d8;font-weight:normal;">4.6.9</div>
<div class="r" style="left:1619px;top:76px;width:1px;height:956px;background:#19191b;"></div>
<div class="r" style="left:1218px;top:284px;width:12px;height:746px;background:linear-gradient(90deg, rgba(0,0,0,0), rgba(0,0,0,0.3));"></div>
<div class="r" style="left:1230px;top:284px;width:380px;height:746px;background:#141517;border:1px solid #3a3a3a;border-radius:3px;box-sizing:border-box"></div>
<svg class="r" style="left:1253px;top:316px;" width="12" height="12" viewBox="0 0 12 12"><path d="M6 0.8L11.2 6L6 11.2L0.8 6Z M3.8 5H8.2 M3.8 7H8.2" fill="none" stroke="#e8e8e8" stroke-width="1.1"/></svg>
<div class="t" style="left:1270px;top:313px;font-size:14px;line-height:16px;color:#f0f0f0;font-weight:normal;">名称</div>
<div class="t" style="left:1218px;top:348px;font-size:14px;line-height:16px;color:#ffffff;font-weight:normal;width:100px;text-align:right">名称</div>
<div class="r" style="left:1343px;top:342px;width:244px;height:30px;background:#141517;border:1px solid #505050;box-sizing:border-box"></div>
<div class="t" style="left:1351px;top:348px;font-size:13px;line-height:15px;color:#808080;font-weight:normal;">默认名称</div>
<div class="r" style="left:1253px;top:392px;width:334px;height:1px;background:#3c3c3c;"></div>
<svg class="r" style="left:1254px;top:412px;" width="10" height="12" viewBox="0 0 10 12"><path d="M6.5 0L0.5 7H4.5L3.5 12L9.5 5H5.5Z" fill="#e8e8e8"/></svg>
<div class="t" style="left:1270px;top:409px;font-size:14px;line-height:16px;color:#f0f0f0;font-weight:normal;">事件</div>
<div class="t" style="left:1218px;top:446px;font-size:12px;line-height:14px;color:#ffffff;font-weight:normal;width:100px;text-align:right">触发</div>
<div class="r" style="left:1343px;top:438px;width:244px;height:30px;background:#141517;border:1px solid #505050;box-sizing:border-box"></div>
<div class="t" style="left:1351px;top:446px;font-size:12px;line-height:14px;color:#d8d8d8;font-weight:normal;">点击</div>
<svg class="r" style="left:1565px;top:450px;" width="12" height="7" viewBox="0 0 12 7"><path d="M0.8 0.8L6 6L11.2 0.8" fill="none" stroke="#8a8a8a" stroke-width="1.1"/></svg>
<div class="r" style="left:1253px;top:488px;width:334px;height:1px;background:#3c3c3c;"></div>
<svg class="r" style="left:1253px;top:508px;" width="12" height="11" viewBox="0 0 12 11"><path d="M6 0.8L7.5 4.2L11.2 4.5L8.4 7L9.3 10.5L6 8.6L2.7 10.5L3.6 7L0.8 4.5L4.5 4.2Z" fill="none" stroke="#e8e8e8" stroke-width="1.1"/></svg>
<div class="t" style="left:1270px;top:505px;font-size:14px;line-height:16px;color:#f0f0f0;font-weight:normal;">动作</div>
<div class="t" style="left:1218px;top:542px;font-size:12px;line-height:14px;color:#ffffff;font-weight:normal;width:100px;text-align:right">动作</div>
<div class="r" style="left:1343px;top:534px;width:244px;height:30px;background:#141517;border:1px solid #505050;box-sizing:border-box"></div>
<div class="t" style="left:1351px;top:542px;font-size:12px;line-height:14px;color:#d8d8d8;font-weight:normal;">自定义</div>
<svg class="r" style="left:1565px;top:546px;" width="12" height="7" viewBox="0 0 12 7"><path d="M0.8 0.8L6 6L11.2 0.8" fill="none" stroke="#8a8a8a" stroke-width="1.1"/></svg>
<div class="t" style="left:1218px;top:582px;font-size:12px;line-height:14px;color:#ffffff;font-weight:normal;width:100px;text-align:right">目标组件</div>
<div class="r" style="left:1343px;top:574px;width:244px;height:30px;background:#141517;border:1px solid #505050;box-sizing:border-box"></div>
<div class="t" style="left:1351px;top:582px;font-size:12px;line-height:14px;color:#d8d8d8;font-weight:normal;">场景</div>
<svg class="r" style="left:1565px;top:586px;" width="12" height="7" viewBox="0 0 12 7"><path d="M0.8 0.8L6 6L11.2 0.8" fill="none" stroke="#8a8a8a" stroke-width="1.1"/></svg>
<div class="t" style="left:1218px;top:622px;font-size:12px;line-height:14px;color:#ffffff;font-weight:normal;width:100px;text-align:right">自定义动作</div>
<div class="r" style="left:1343px;top:614px;width:244px;height:30px;background:#141517;border:1px solid #1a8cff;box-sizing:border-box"></div>
<div class="t" style="left:1351px;top:622px;font-size:12px;line-height:14px;color:#8c8c8c;font-weight:normal;">面积测绘</div>
<svg class="r" style="left:1565px;top:625px;" width="12" height="7" viewBox="0 0 12 7"><path d="M0.8 6L6 0.8L11.2 6" fill="none" stroke="#8a8a8a" stroke-width="1.1"/></svg>
<div class="t" style="left:1253px;top:742px;font-size:12px;line-height:14px;color:#ffffff;font-weight:normal;">基础字体...</div>
<div class="t" style="left:1218px;top:662px;font-size:12px;line-height:14px;color:#ffffff;font-weight:normal;width:100px;text-align:right">多边形颜色</div>
<div class="t" style="left:1218px;top:702px;font-size:12px;line-height:14px;color:#ffffff;font-weight:normal;width:100px;text-align:right">保留位数</div>
<div class="t" style="left:1218px;top:782px;font-size:12px;line-height:14px;color:#ffffff;font-weight:normal;width:100px;text-align:right">字体颜色</div>
<div class="t" style="left:1218px;top:822px;font-size:12px;line-height:14px;color:#ffffff;font-weight:normal;width:100px;text-align:right">顺序</div>
<div class="t" style="left:1218px;top:862px;font-size:12px;line-height:14px;color:#ffffff;font-weight:normal;width:100px;text-align:right">延时(ms)</div>
<div class="t" style="left:1218px;top:902px;font-size:12px;line-height:14px;color:#ffffff;font-weight:normal;width:100px;text-align:right">时长(ms)</div>
<div class="r" style="left:1253px;top:944px;width:334px;height:1px;background:#3c3c3c;"></div>
<div class="r" style="left:1263px;top:965px;width:151px;height:32px;background:transparent;border:1px solid #5a5a5a;box-sizing:border-box"></div>
<div class="t" style="left:1263px;top:974px;font-size:13px;line-height:15px;color:#e0e0e0;font-weight:normal;width:151px;text-align:center">取消</div>
<div class="r" style="left:1426px;top:965px;width:151px;height:32px;background:#0a8cff;"></div>
<div class="t" style="left:1426px;top:974px;font-size:13px;line-height:15px;color:#ffffff;font-weight:normal;width:151px;text-align:center">确认</div>
<div class="r" style="left:1343px;top:652px;width:246px;height:293px;background:#222325;border-radius:4px;box-shadow:0 -2px 8px rgba(0,0,0,0.45)"></div>
<svg class="r" style="left:1458px;top:646px;" width="16" height="7" viewBox="0 0 16 7"><path d="M0 7L8 0L16 7Z" fill="#222325"/></svg>
<div class="r" style="left:1345px;top:659px;width:240px;height:268px;background:#1f1f1f;"></div>
<div class="r" style="left:1345px;top:927px;width:240px;height:16px;background:#121315;"></div>
<div class="r" style="left:1345px;top:737px;width:240px;height:26px;background:#2a2a2a;"></div>
<div class="t" style="left:1354px;top:666px;font-size:11px;line-height:13px;color:#d0d0d0;font-weight:normal;">空间直线距离测绘</div>
<div class="t" style="left:1354px;top:692px;font-size:11px;line-height:13px;color:#d0d0d0;font-weight:normal;">等角航线距离测绘</div>
<div class="t" style="left:1354px;top:718px;font-size:11px;line-height:13px;color:#d0d0d0;font-weight:normal;">测地线距离测绘</div>
<div class="t" style="left:1354px;top:744px;font-size:11px;line-height:13px;color:#1890ff;font-weight:normal;">面积测绘</div>
<div class="t" style="left:1354px;top:770px;font-size:11px;line-height:13px;color:#d0d0d0;font-weight:normal;">高度测绘</div>
<div class="t" style="left:1354px;top:796px;font-size:11px;line-height:13px;color:#d0d0d0;font-weight:normal;">空间角测绘</div>
<div class="t" style="left:1354px;top:822px;font-size:11px;line-height:13px;color:#d0d0d0;font-weight:normal;">平面角测绘</div>
<div class="t" style="left:1354px;top:848px;font-size:11px;line-height:13px;color:#d0d0d0;font-weight:normal;">方位角测绘</div>
<div class="t" style="left:1354px;top:874px;font-size:11px;line-height:13px;color:#d0d0d0;font-weight:normal;">坐标测绘</div>
<div class="t" style="left:1354px;top:900px;font-size:11px;line-height:13px;color:#d0d0d0;font-weight:normal;">清除测绘</div>
<div class="r" style="left:1609px;top:1004px;width:7px;height:17px;background:transparent;border:1.5px solid #8a8a8a;border-left:none;box-sizing:border-box"></div>
<svg class="r" style="left:0px;top:0px;pointer-events:none" width="1920" height="1032" viewBox="0 0 1920 1032"><rect x="23" y="142" width="101" height="35" rx="6" fill="none" stroke="#f44a46" stroke-width="4"/><rect x="1674" y="117" width="35" height="39" rx="6" fill="none" stroke="#f44a46" stroke-width="4"/><rect x="1237" y="518" width="363" height="74" rx="6" fill="none" stroke="#f44a46" stroke-width="4"/><rect x="1343" y="657" width="243" height="286" rx="6" fill="none" stroke="#f44a46" stroke-width="4"/><path d="M144.0 163.2 L1639.0 158.7 L1638.1 165.7 L1669.0 151.0 L1637.9 136.7 L1639.0 143.7 L144.0 158.8Z" fill="#f44a46" stroke="#f44a46" stroke-width="1.5" stroke-linejoin="round"/><path d="M205.6 365.2 L127.7 202.7 L138.5 202.9 L112.5 183.5 L112.5 215.9 L118.8 207.2 L202.4 366.8Z" fill="#f44a46" stroke="#f44a46" stroke-width="1.5" stroke-linejoin="round"/><path d="M1696.4 172.2 L1548.3 473.8 L1541.4 465.0 L1542.0 498.5 L1568.5 477.9 L1557.3 478.1 L1699.6 173.8Z" fill="#f44a46" stroke="#f44a46" stroke-width="1.5" stroke-linejoin="round"/></svg>
</body></html>
